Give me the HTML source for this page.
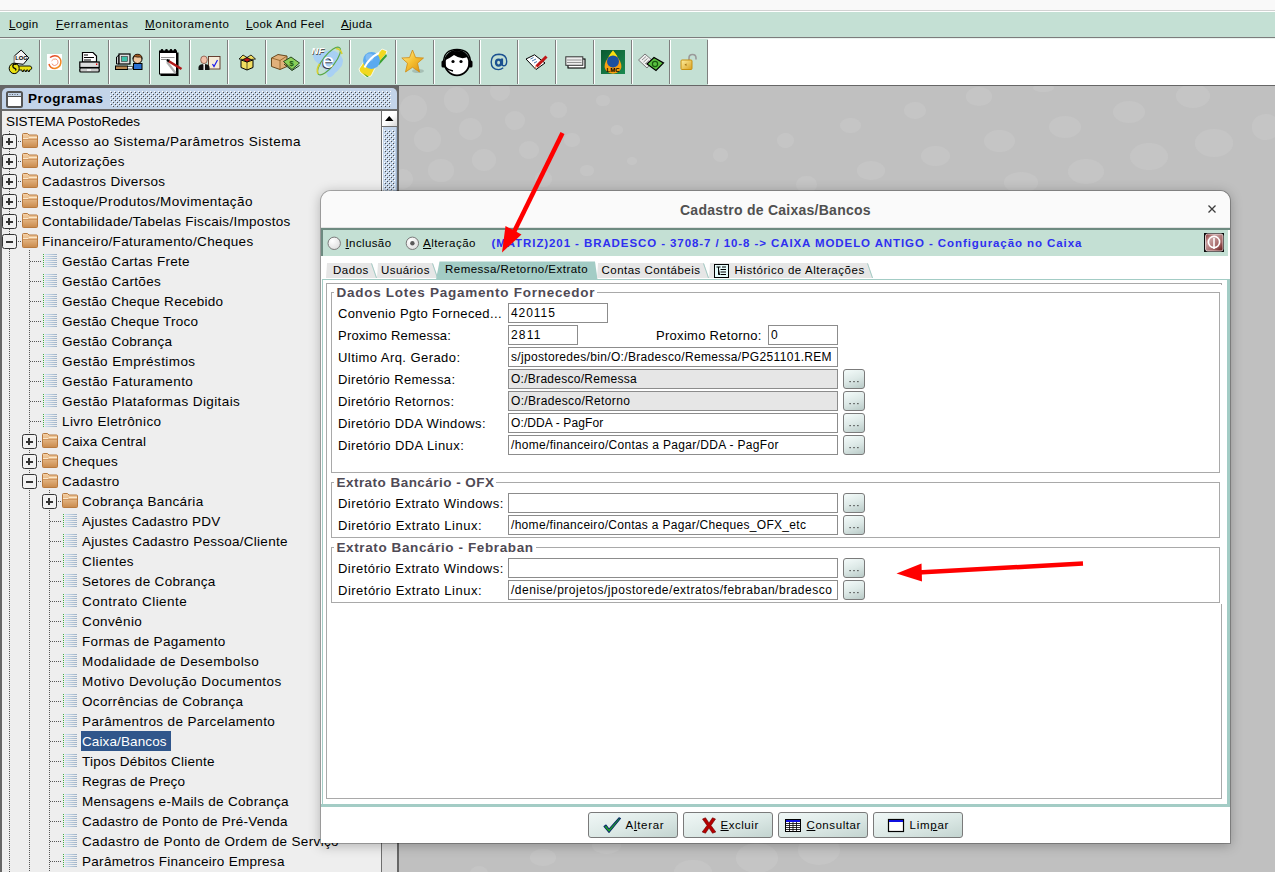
<!DOCTYPE html>
<html><head><meta charset="utf-8"><title>Cadastro de Caixas/Bancos</title>
<style>
html,body{margin:0;padding:0;width:1275px;height:872px;overflow:hidden;background:#c0c0c0;}
body{position:relative;font-family:"Liberation Sans",sans-serif;color:#000;}
.r{position:absolute;box-sizing:border-box;}
.t{position:absolute;white-space:pre;}
u{text-decoration:underline;text-underline-offset:1px;}
svg{position:absolute;overflow:visible;}
</style></head><body>
<div class="r" style="left:0px;top:0px;width:1275px;height:10px;background:#f9f9f9"></div>
<div class="r" style="left:0px;top:10px;width:1275px;height:1px;background:#d2d2d2"></div>
<div class="r" style="left:0px;top:11px;width:1275px;height:1px;background:#ffffff"></div>
<div class="r" style="left:0px;top:12px;width:1275px;height:25px;background:#c4e0d4"></div>
<div class="r" style="left:0px;top:37px;width:1275px;height:1px;background:#7c7c7c"></div>
<div class="r" style="left:0px;top:38px;width:1275px;height:1px;background:#eaf4ef"></div>
<div class="r" style="left:0px;top:39px;width:1275px;height:46px;background:#c4e0d4"></div>
<div class="t" style="left:9.00px;top:19px;font-size:11.5px;line-height:11.5px;letter-spacing:0.225px;"><u>L</u>ogin</div>
<div class="t" style="left:56.00px;top:19px;font-size:11.5px;line-height:11.5px;letter-spacing:0.680px;"><u>F</u>erramentas</div>
<div class="t" style="left:145.00px;top:19px;font-size:11.5px;line-height:11.5px;letter-spacing:0.608px;"><u>M</u>onitoramento</div>
<div class="t" style="left:246.00px;top:19px;font-size:11.5px;line-height:11.5px;letter-spacing:0.375px;"><u>L</u>ook And Feel</div>
<div class="t" style="left:341.00px;top:19px;font-size:11.5px;line-height:11.5px;letter-spacing:0.400px;"><u>A</u>juda</div>
<div class="r" style="left:39px;top:40px;width:1px;height:44px;background:#7f7f7f"></div>
<div class="r" style="left:40px;top:40px;width:1px;height:44px;background:#ffffff"></div>
<div class="r" style="left:68px;top:40px;width:1px;height:44px;background:#7f7f7f"></div>
<div class="r" style="left:69px;top:40px;width:1px;height:44px;background:#ffffff"></div>
<div class="r" style="left:108px;top:40px;width:1px;height:44px;background:#7f7f7f"></div>
<div class="r" style="left:109px;top:40px;width:1px;height:44px;background:#ffffff"></div>
<div class="r" style="left:149px;top:40px;width:1px;height:44px;background:#7f7f7f"></div>
<div class="r" style="left:150px;top:40px;width:1px;height:44px;background:#ffffff"></div>
<div class="r" style="left:189px;top:40px;width:1px;height:44px;background:#7f7f7f"></div>
<div class="r" style="left:190px;top:40px;width:1px;height:44px;background:#ffffff"></div>
<div class="r" style="left:227px;top:40px;width:1px;height:44px;background:#7f7f7f"></div>
<div class="r" style="left:228px;top:40px;width:1px;height:44px;background:#ffffff"></div>
<div class="r" style="left:265px;top:40px;width:1px;height:44px;background:#7f7f7f"></div>
<div class="r" style="left:266px;top:40px;width:1px;height:44px;background:#ffffff"></div>
<div class="r" style="left:303px;top:40px;width:1px;height:44px;background:#7f7f7f"></div>
<div class="r" style="left:304px;top:40px;width:1px;height:44px;background:#ffffff"></div>
<div class="r" style="left:349px;top:40px;width:1px;height:44px;background:#7f7f7f"></div>
<div class="r" style="left:350px;top:40px;width:1px;height:44px;background:#ffffff"></div>
<div class="r" style="left:395px;top:40px;width:1px;height:44px;background:#7f7f7f"></div>
<div class="r" style="left:396px;top:40px;width:1px;height:44px;background:#ffffff"></div>
<div class="r" style="left:433px;top:40px;width:1px;height:44px;background:#7f7f7f"></div>
<div class="r" style="left:434px;top:40px;width:1px;height:44px;background:#ffffff"></div>
<div class="r" style="left:479px;top:40px;width:1px;height:44px;background:#7f7f7f"></div>
<div class="r" style="left:480px;top:40px;width:1px;height:44px;background:#ffffff"></div>
<div class="r" style="left:517px;top:40px;width:1px;height:44px;background:#7f7f7f"></div>
<div class="r" style="left:518px;top:40px;width:1px;height:44px;background:#ffffff"></div>
<div class="r" style="left:555px;top:40px;width:1px;height:44px;background:#7f7f7f"></div>
<div class="r" style="left:556px;top:40px;width:1px;height:44px;background:#ffffff"></div>
<div class="r" style="left:593px;top:40px;width:1px;height:44px;background:#7f7f7f"></div>
<div class="r" style="left:594px;top:40px;width:1px;height:44px;background:#ffffff"></div>
<div class="r" style="left:631px;top:40px;width:1px;height:44px;background:#7f7f7f"></div>
<div class="r" style="left:632px;top:40px;width:1px;height:44px;background:#ffffff"></div>
<div class="r" style="left:669px;top:40px;width:1px;height:44px;background:#7f7f7f"></div>
<div class="r" style="left:670px;top:40px;width:1px;height:44px;background:#ffffff"></div>
<div class="r" style="left:707px;top:40px;width:1px;height:44px;background:#7f7f7f"></div>
<div class="r" style="left:708px;top:40px;width:1px;height:44px;background:#ffffff"></div>
<div class="r" style="left:708px;top:39px;width:567px;height:46px;background:#ffffff"></div>
<div class="r" style="left:0px;top:85px;width:1275px;height:1px;background:#666"></div>
<div class="r" style="left:399px;top:86px;width:876px;height:786px;background:#c0c0c0;overflow:hidden"></div>
<svg style="left:8px;top:49px" width="26" height="26" viewBox="0 0 26 26"><path d="M13.2 1 L20.8 8.9 L15.3 15.3 L6.3 14.2 L6.3 7 Z" fill="#f4f4f4" stroke="#000" stroke-width="1"/><path d="M6.3 7 L6.3 14.2" stroke="#bbb" stroke-width="1"/><text x="13.6" y="11.2" font-family="Liberation Sans" font-size="5.8" font-weight="bold" text-anchor="middle" fill="#000">LOG</text><path d="M10.5 17 H22.5 L24 19 L22.5 21 H21.5 V22.5 H20 V21 H18.5 V22.5 H17 V21 H15.5 V22.5 H14 V21 H10.5 Z" fill="#e8e010" stroke="#000" stroke-width="0.9"/><ellipse cx="6.2" cy="19.4" rx="5" ry="5.2" fill="#e8e010" stroke="#000" stroke-width="1"/><path d="M8.5 15.5 Q5 14.5 4.8 17 Q4.8 19 7 19.5 Q8.5 20 7.5 21.5" fill="none" stroke="#000" stroke-width="1.3"/></svg>
<svg style="left:47px;top:54px" width="16" height="16" viewBox="0 0 16 16"><defs><linearGradient id="swg" x1="0" y1="0" x2="1" y2="1"><stop offset="0" stop-color="#e03828"/><stop offset="1" stop-color="#f8a020"/></linearGradient></defs><rect width="15" height="16" fill="#fff"/><path d="M3 3.5 Q7 0.8 11 2.5 Q14.5 5 13.8 9 Q13 13.5 8 14.5 Q3 14.5 2 10" fill="none" stroke="url(#swg)" stroke-width="1.5"/><path d="M4.5 7 Q6 4.5 9 5 Q11.5 6 11 9 Q10 11.5 7.5 11.5 Q5.5 11.5 5 9.5" fill="none" stroke="#f08060" stroke-width="1" opacity="0.8"/></svg>
<svg style="left:79px;top:51px" width="21" height="22" viewBox="0 0 21 22"><path d="M3.5 1.5 H14 L17.5 5 V11 H3.5 Z" fill="#fff" stroke="#000" stroke-width="1.2"/><path d="M5 4 H9 M5 6.5 H15 M5 9 H12" stroke="#000" stroke-width="1"/><rect x="0.8" y="11" width="19.4" height="5.5" fill="#ddd" stroke="#000" stroke-width="1.2"/><rect x="17" y="12.5" width="1.3" height="1.5" fill="#e00"/><rect x="0.8" y="17" width="19.4" height="4" rx="1" fill="#ccc" stroke="#000" stroke-width="1.2"/><rect x="8" y="18.3" width="4" height="1.4" fill="#fff"/></svg>
<svg style="left:115px;top:53px" width="28" height="18" viewBox="0 0 28 18"><path d="M1.5 4 L4 2 V11 H1.5 Z" fill="#ccc" stroke="#000" stroke-width="1"/><rect x="4" y="1" width="11" height="10" fill="#ddd" stroke="#000" stroke-width="1.2"/><rect x="6.5" y="3.5" width="6" height="5" fill="#3cc0a8" stroke="#333" stroke-width="0.6"/><rect x="0.5" y="13" width="12" height="3.5" fill="#b88850" stroke="#000" stroke-width="1"/><rect x="12.5" y="13.5" width="5" height="2.5" fill="#fff" stroke="#000" stroke-width="0.6"/><circle cx="22.5" cy="6" r="4.5" fill="#f0c8a0" stroke="#000" stroke-width="1"/><path d="M18 5.5 Q18.5 1.2 22.5 1.2 Q27 1.2 27 5.5 L25.5 4 Q22 4.5 19.5 3.5 Z" fill="#a05a20" stroke="#000" stroke-width="0.6"/><rect x="18.5" y="10.5" width="8.5" height="6" fill="#2a70d0" stroke="#000" stroke-width="1"/></svg>
<svg style="left:158px;top:48px" width="24" height="28" viewBox="0 0 24 28"><rect x="1.5" y="3.5" width="17" height="22.5" fill="#fff" stroke="#000" stroke-width="1"/><path d="M19.5 4.5 V27 H2.5" fill="none" stroke="#000" stroke-width="2"/><rect x="1" y="2.5" width="18" height="2.5" fill="#000"/><circle cx="4" cy="2.3" r="1.3" fill="#000"/><circle cx="8.5" cy="2.3" r="1.3" fill="#000"/><circle cx="13" cy="2.3" r="1.3" fill="#000"/><circle cx="17" cy="2.3" r="1.3" fill="#000"/><path d="M3 9.5 H16.5 M3 11.5 H12" stroke="#666" stroke-width="0.7"/><path d="M9 14 L17.5 25" stroke="#b0b0b0" stroke-width="2.2"/><path d="M10.5 13 L23.5 21" stroke="#b01818" stroke-width="2.6"/><path d="M8.8 12 L11 13.3" stroke="#000" stroke-width="2.2"/></svg>
<svg style="left:198px;top:55px" width="24" height="16" viewBox="0 0 24 16"><rect x="10.5" y="1.5" width="11.5" height="12.5" fill="#f6ecd8" stroke="#5a3020" stroke-width="0.9"/><path d="M14.5 9 L16 11.5 L19.5 5" fill="none" stroke="#1a1aee" stroke-width="1.2"/><ellipse cx="6" cy="4.8" rx="3.3" ry="3.8" fill="#f0c0a8" stroke="#7a4030" stroke-width="0.7"/><path d="M0.5 15 V12 Q1 9 6 9 Q11 9 11.5 12 V15 Z" fill="#111"/><path d="M5 9 H7 V15 H5 Z" fill="#fff"/><path d="M5.7 9.5 V15" stroke="#111" stroke-width="0.6"/></svg>
<svg style="left:238px;top:53px" width="19" height="18" viewBox="0 0 19 18"><path d="M3 7 L9 9 L15 7 L15 14.5 L9 17 L3 14.5 Z" fill="#f2de60" stroke="#000" stroke-width="1"/><path d="M5 6.5 L9 4.5 L13 6.5 L9 9 Z" fill="#c01010" stroke="#000" stroke-width="0.6"/><path d="M1 6 L5 2 L9 4.5 L5 6.5 Z M17.5 6 L13 2 L9 4.5 L13 6.5 Z" fill="#f2de60" stroke="#000" stroke-width="0.8"/><path d="M9 9 V17" stroke="#000" stroke-width="0.6"/></svg>
<svg style="left:270px;top:53px" width="31" height="19" viewBox="0 0 31 19"><path d="M1.5 5 L8 1.5 L17 3 L17 13.5 L10 16.5 L1.5 13.5 Z" fill="#e0b07a" stroke="#5a3a10" stroke-width="0.9"/><path d="M1.5 5 L10 7.5 L17 3 M10 7.5 V16.5" fill="none" stroke="#8a5a20" stroke-width="0.8"/><path d="M13.5 8.5 L21 4 L29.5 10 L22 16.5 Z" fill="#8cd05a" stroke="#1a3a10" stroke-width="0.9"/><path d="M14 11 L22 17.5 L29.5 12.5" fill="none" stroke="#1a3a10" stroke-width="1"/><text x="21.5" y="13" font-family="Liberation Sans" font-size="8" font-weight="bold" text-anchor="middle" fill="#1a5a10">$</text></svg>
<svg style="left:310px;top:46px" width="34" height="34" viewBox="0 0 34 34"><path d="M3 9 Q6 6 12 7 Q18 3 25 5 Q31 8 33 14 Q33 19 30 22 Q27 26 25 27 Q22 32 18 31 Q16 27 15 23 Q10 21 8 17 Q3 14 3 9 Z" fill="#a8d0f4"/><text x="2.2" y="8.6" font-family="Liberation Sans" font-size="9.5" font-style="italic" font-weight="bold" fill="#555">NF</text><text x="1.6" y="8" font-family="Liberation Sans" font-size="9.5" font-style="italic" font-weight="bold" fill="#fff">NF</text><ellipse cx="19" cy="15" rx="6" ry="17" transform="rotate(38 19 15)" fill="none" stroke="#5aa848" stroke-width="1.2"/><path d="M26 2.5 Q31 3 32 8" fill="none" stroke="#d8d030" stroke-width="1.5"/><path d="M9.5 18 Q6 23 8 28" fill="none" stroke="#d8d030" stroke-width="1.5"/><text x="11.6" y="22.6" font-family="Liberation Sans" font-size="21" fill="#334">e</text><text x="12.2" y="22.3" font-family="Liberation Sans" font-size="21" fill="#fff">e</text></svg>
<svg style="left:357px;top:46px" width="31" height="32" viewBox="0 0 31 32"><path d="M2 23 L8 14 L14 22 L19 10 L25 3 L30 5 L29 8 L24 14 L19 20 L14 30 L9 31 L3 26 Z" fill="#f2d820" stroke="#fff" stroke-width="0.8"/><path d="M20 18 L29 8 L30 10 L22 19 Z" fill="#3aa030"/><path d="M6 27 L12 31 L10 31 Z" fill="#3aa030"/><circle cx="14.5" cy="14.5" r="8.5" fill="#5aaaf0"/><circle cx="12.5" cy="11.5" r="4" fill="#9ccaf6" opacity="0.6"/><path d="M7.5 21.5 Q12 12 22 7" fill="none" stroke="#fff" stroke-width="2"/></svg>
<svg style="left:401px;top:49px" width="25" height="27" viewBox="0 0 25 27"><defs><linearGradient id="sg" x1="0" y1="0" x2="1" y2="1"><stop offset="0" stop-color="#fff2a0"/><stop offset="0.5" stop-color="#f6c030"/><stop offset="1" stop-color="#d88a10"/></linearGradient></defs><ellipse cx="17" cy="22" rx="6" ry="2" fill="#9ab0a8" opacity="0.7"/><path d="M11.5 1 L14.6 8.6 L22.5 9 L16.5 14.2 L18.5 23 L11.5 18.3 L4.5 23 L6.5 14.2 L0.8 9 L8.5 8.6 Z" fill="url(#sg)" stroke="#d08a10" stroke-width="0.8"/></svg>
<svg style="left:440px;top:48px" width="34" height="29" viewBox="0 0 34 29"><circle cx="17" cy="15" r="12.3" fill="#fff" stroke="#000" stroke-width="1.8"/><path d="M5.5 12 Q7 3 17 3 Q25 3 27.5 9 Q21 12 14 7 Q10 10 5.5 12 Z" fill="#000"/><path d="M3.5 15 Q3.5 1.5 17 1.5 Q30.5 1.5 30.5 15" fill="none" stroke="#000" stroke-width="1.4"/><rect x="1.5" y="12.5" width="4" height="7" rx="1.5" fill="#000"/><rect x="28.5" y="12.5" width="4" height="7" rx="1.5" fill="#000"/><circle cx="13" cy="13.5" r="1.6" fill="#000"/><circle cx="21" cy="13.5" r="1.6" fill="#000"/><path d="M5 19 Q8 22 13 23" fill="none" stroke="#000" stroke-width="1.4"/></svg>
<svg style="left:490px;top:53px" width="18" height="18" viewBox="0 0 18 18"><path d="M13.2 14.8 Q11 16.6 8.6 16.6 Q1.2 16.4 1.2 9 Q1.3 1.4 9 1.2 Q16.7 1.4 16.7 8.5 Q16.6 12.8 13.6 12.8 Q12 12.8 12.1 10.8" fill="none" stroke="#1a5090" stroke-width="1.4"/><ellipse cx="8.6" cy="9.6" rx="2.6" ry="3" fill="none" stroke="#1a5090" stroke-width="2.3"/><path d="M12 5.5 V12.5" stroke="#1a5090" stroke-width="2.2"/></svg>
<svg style="left:525px;top:54px" width="24" height="17" viewBox="0 0 24 17"><path d="M1 5 L9.5 0.8 L20 9 L11 15.5 Z" fill="#fff" stroke="#000" stroke-width="1"/><path d="M5.5 5 L8.5 3.5 M7 7 L11 5 M9 9 L12 7.5" stroke="#4a7ab0" stroke-width="1"/><path d="M11.5 12.5 L21.5 2.5" stroke="#c01818" stroke-width="3"/><path d="M10 14 L11.5 12.2" stroke="#f08060" stroke-width="1.2"/></svg>
<svg style="left:565px;top:56px" width="21" height="13" viewBox="0 0 21 13"><rect x="3" y="3" width="17" height="9" fill="#fff" stroke="#000" stroke-width="1.1"/><rect x="0.8" y="0.8" width="17" height="8.5" fill="#eee" stroke="#333" stroke-width="1"/><path d="M2 4 H16.5 M2 6.5 H16.5" stroke="#888" stroke-width="0.9"/></svg>
<svg style="left:601px;top:50px" width="24" height="24" viewBox="0 0 24 24"><defs><linearGradient id="lg" x1="0" y1="0" x2="1" y2="1"><stop offset="0" stop-color="#0a5a30"/><stop offset="1" stop-color="#1a8a50"/></linearGradient></defs><rect width="24" height="24" fill="url(#lg)"/><path d="M12 0.5 Q16 6 19 11 Q22 17 18.5 21 Q15.5 23.8 12 23.8 Q8.5 23.8 5.5 21 Q2 17 5 11 Q8 6 12 0.5 Z" fill="#f8a010"/><path d="M12 0.5 Q14.5 3.5 16.5 6.5 H7.5 Q9.5 3.5 12 0.5 Z" fill="#f8e010"/><circle cx="12" cy="11.5" r="6" fill="#1a50a0"/><text x="12" y="22.3" font-family="Liberation Sans" font-size="6" font-weight="bold" text-anchor="middle" fill="#000">LMC</text></svg>
<svg style="left:637px;top:53px" width="28" height="19" viewBox="0 0 28 19"><path d="M1.5 7 L8 1 L16 8 L10 15 Z" fill="#eee" stroke="#777" stroke-width="1"/><path d="M5 7 L9 3.5 M6.5 9 L10.5 5.5 M8 11 L12 7.5" stroke="#777" stroke-width="0.8"/><path d="M10 11 L17 4.5 L26.5 10 L19 17.5 Z" fill="#5ac040" stroke="#000" stroke-width="1.2"/><circle cx="18" cy="11" r="2.6" fill="none" stroke="#1a5a10" stroke-width="1.2"/></svg>
<svg style="left:680px;top:53px" width="19" height="18" viewBox="0 0 19 18"><path d="M9 8 V5 Q9 1.5 12.5 1.5 Q16 1.5 16 5 V6.5" fill="none" stroke="#9a9a9a" stroke-width="1.6"/><defs><linearGradient id="pl" x1="0" y1="0" x2="1" y2="1"><stop offset="0" stop-color="#fff0a0"/><stop offset="1" stop-color="#d8a020"/></linearGradient></defs><rect x="1" y="7" width="11" height="9.5" rx="1" fill="url(#pl)" stroke="#c89010" stroke-width="1"/><path d="M6.5 10.5 L4.5 11.8 L6.5 13 Z" fill="#a07010"/></svg>
<div class="r" style="left:399px;top:86px;width:876px;height:786px;overflow:hidden">
<div class="r" style="left:0.9px;top:8.8px;width:27.2px;height:27.2px;border-radius:50%;background:#c5c5c5"></div>
<div class="r" style="left:44.9px;top:1.0px;width:25.5px;height:25.5px;border-radius:50%;background:#c5c5c5"></div>
<div class="r" style="left:90.6px;top:-5.2px;width:20.4px;height:20.4px;border-radius:50%;background:#c5c5c5"></div>
<div class="r" style="left:105.8px;top:25.1px;width:20.4px;height:18.7px;border-radius:50%;background:#c5c5c5"></div>
<div class="r" style="left:150.8px;top:16.4px;width:17.0px;height:15.3px;border-radius:50%;background:#c5c5c5"></div>
<div class="r" style="left:197.2px;top:8.6px;width:13.6px;height:11.9px;border-radius:50%;background:#c5c5c5"></div>
<div class="r" style="left:14.7px;top:40.7px;width:27.2px;height:25.5px;border-radius:50%;background:#c5c5c5"></div>
<div class="r" style="left:59.5px;top:32.0px;width:23.8px;height:22.1px;border-radius:50%;background:#c5c5c5"></div>
<div class="r" style="left:119.8px;top:54.5px;width:20.4px;height:18.7px;border-radius:50%;background:#c5c5c5"></div>
<div class="r" style="left:165.3px;top:47.2px;width:15.3px;height:13.6px;border-radius:50%;background:#c5c5c5"></div>
<div class="r" style="left:212.1px;top:38.9px;width:11.9px;height:10.2px;border-radius:50%;background:#c5c5c5"></div>
<div class="r" style="left:73.1px;top:63.0px;width:23.8px;height:22.1px;border-radius:50%;background:#c5c5c5"></div>
<div class="r" style="left:29.2px;top:72.6px;width:25.5px;height:23.8px;border-radius:50%;background:#c5c5c5"></div>
<div class="r" style="left:-6.2px;top:82.8px;width:20.4px;height:20.4px;border-radius:50%;background:#c5c5c5"></div>
<div class="r" style="left:181.2px;top:78.5px;width:13.6px;height:11.9px;border-radius:50%;background:#c5c5c5"></div>
<div class="r" style="left:227.5px;top:70.8px;width:10.2px;height:8.5px;border-radius:50%;background:#c5c5c5"></div>
<div class="r" style="left:135.5px;top:85.3px;width:17.0px;height:15.3px;border-radius:50%;background:#c5c5c5"></div>
<div class="r" style="left:314.0px;top:62.2px;width:15.3px;height:13.6px;border-radius:50%;background:#c5c5c5"></div>
<div class="r" style="left:377.5px;top:46.9px;width:17.0px;height:15.3px;border-radius:50%;background:#c5c5c5"></div>
<div class="r" style="left:397.4px;top:89.5px;width:20.4px;height:17.0px;border-radius:50%;background:#c5c5c5"></div>
<div class="r" style="left:131.2px;top:762.5px;width:25.5px;height:17.0px;border-radius:50%;background:#c5c5c5"></div>
<div class="r" style="left:70.7px;top:780.4px;width:18.7px;height:15.3px;border-radius:50%;background:#c5c5c5"></div>
<div class="r" style="left:193.2px;top:750.5px;width:28.9px;height:17.0px;border-radius:50%;background:#c5c5c5"></div>
<div class="r" style="left:275.3px;top:774.1px;width:37.4px;height:23.8px;border-radius:50%;background:#c5c5c5"></div>
<div class="r" style="left:336.8px;top:756.7px;width:42.5px;height:30.6px;border-radius:50%;background:#c5c5c5"></div>
<div class="r" style="left:398.5px;top:748.7px;width:42.5px;height:30.6px;border-radius:50%;background:#c5c5c5"></div>
<div class="r" style="left:441.3px;top:32.1px;width:20.4px;height:15.3px;border-radius:50%;background:#c5c5c5"></div>
<div class="r" style="left:504.9px;top:16.3px;width:22.1px;height:17.0px;border-radius:50%;background:#c5c5c5"></div>
<div class="r" style="left:567.2px;top:0.9px;width:25.5px;height:18.7px;border-radius:50%;background:#c5c5c5"></div>
<div class="r" style="left:458.4px;top:75.2px;width:27.2px;height:18.7px;border-radius:50%;background:#c5c5c5"></div>
<div class="r" style="left:522.2px;top:59.8px;width:28.9px;height:20.4px;border-radius:50%;background:#c5c5c5"></div>
<div class="r" style="left:585.2px;top:44.0px;width:30.6px;height:22.1px;border-radius:50%;background:#c5c5c5"></div>
<div class="r" style="left:605.0px;top:86.3px;width:34.0px;height:20.4px;border-radius:50%;background:#c5c5c5"></div>
<div class="r" style="left:649.9px;top:29.7px;width:32.3px;height:22.1px;border-radius:50%;background:#c5c5c5"></div>
<div class="r" style="left:669.1px;top:72.8px;width:35.7px;height:25.5px;border-radius:50%;background:#c5c5c5"></div>
<div class="r" style="left:713.9px;top:15.0px;width:32.3px;height:22.1px;border-radius:50%;background:#c5c5c5"></div>
<div class="r" style="left:731.3px;top:57.1px;width:37.4px;height:27.2px;border-radius:50%;background:#c5c5c5"></div>
<div class="r" style="left:777.0px;top:-1.6px;width:34.0px;height:23.8px;border-radius:50%;background:#c5c5c5"></div>
<div class="r" style="left:796.3px;top:43.4px;width:37.4px;height:27.2px;border-radius:50%;background:#c5c5c5"></div>
<div class="r" style="left:852.5px;top:28.2px;width:28.9px;height:25.5px;border-radius:50%;background:#c5c5c5"></div>
<div class="r" style="left:634.4px;top:-2.5px;width:20.4px;height:8.5px;border-radius:50%;background:#c5c5c5"></div>
</div>
<div class="r" style="left:0px;top:86px;width:399px;height:786px;background:#666"></div>
<div class="r" style="left:2px;top:88px;width:395px;height:21px;background:#c3d4e9;border-radius:5px 5px 0 0"></div>
<div class="r" style="left:2px;top:109px;width:395px;height:2px;background:#6a6a6a"></div>
<div class="r" style="left:2px;top:111px;width:379px;height:761px;background:#eeeeee"></div>
<svg style="left:6px;top:91px" width="17" height="17" viewBox="0 0 17 17"><rect x="1" y="1" width="15" height="15" rx="1.5" fill="#fff" stroke="#555" stroke-width="2"/><rect x="2" y="2" width="13" height="3" fill="#c3d4e9"/><path d="M2 5.5 H15" stroke="#555" stroke-width="1"/><circle cx="4" cy="3.5" r="0.6" fill="#555"/><circle cx="6.5" cy="3.5" r="0.6" fill="#555"/><circle cx="9" cy="3.5" r="0.6" fill="#555"/><circle cx="11.5" cy="3.5" r="0.6" fill="#555"/></svg>
<div class="t" style="left:28.00px;top:92px;font-size:13.5px;line-height:13.5px;font-weight:bold;letter-spacing:0.562px;">Programas</div>
<svg style="left:110px;top:91px" width="281" height="16"><defs><pattern id="p110_91" width="4" height="4" patternUnits="userSpaceOnUse"><rect x="1" y="1" width="1" height="1" fill="#4a4a4a"/><rect x="0" y="0" width="1" height="1" fill="#ffffff"/><rect x="3" y="3" width="1" height="1" fill="#4a4a4a"/><rect x="2" y="2" width="1" height="1" fill="#ffffff"/></pattern></defs><rect width="281" height="16" fill="url(#p110_91)"/></svg>
<div class="r" style="left:9px;top:131px;width:1px;height:741px;background:repeating-linear-gradient(to bottom,#555 0 1px,transparent 1px 2px)"></div>
<div class="r" style="left:29px;top:250px;width:1px;height:622px;background:repeating-linear-gradient(to bottom,#555 0 1px,transparent 1px 2px)"></div>
<div class="r" style="left:49px;top:490px;width:1px;height:382px;background:repeating-linear-gradient(to bottom,#555 0 1px,transparent 1px 2px)"></div>
<div class="t" style="left:6.00px;top:115px;font-size:13.5px;line-height:13.5px;letter-spacing:-0.106px;">SISTEMA PostoRedes</div>
<div class="r" style="left:18px;top:141px;width:4px;height:1px;background:repeating-linear-gradient(to right,#555 0 1px,transparent 1px 2px)"></div>
<div class="r" style="left:2px;top:134px;width:15px;height:15px;border:1px solid #333;border-radius:2.5px;background:#f1f1f1"></div><div class="r" style="left:6px;top:141px;width:7px;height:2px;background:#333"></div><div class="r" style="left:8px;top:138px;width:2px;height:7px;background:#333"></div>
<svg style="left:22px;top:132px" width="16" height="16" viewBox="0 0 16 16"><defs><linearGradient id="fg" x1="0" y1="0" x2="0" y2="1"><stop offset="0" stop-color="#f6d3a8"/><stop offset="1" stop-color="#c98a4c"/></linearGradient></defs><path d="M0.5 2.5 Q0.5 1.5 1.5 1.5 L5.5 1.5 L7 3 L14.5 3 Q15.5 3 15.5 4 L15.5 14.5 Q15.5 15.5 14.5 15.5 L1.5 15.5 Q0.5 15.5 0.5 14.5 Z" fill="url(#fg)" stroke="#b87a40" stroke-width="1"/><path d="M1 6.5 L6 6.5 L7 5.5 L15 5.5" fill="none" stroke="#fbe6c8" stroke-width="1"/><path d="M1 7.5 L15 7.5" fill="none" stroke="#c58a52" stroke-width="0.7"/></svg>
<div class="t" style="left:42.00px;top:135px;font-size:13.5px;line-height:13.5px;letter-spacing:0.483px;">Acesso ao Sistema/Parâmetros Sistema</div>
<div class="r" style="left:18px;top:161px;width:4px;height:1px;background:repeating-linear-gradient(to right,#555 0 1px,transparent 1px 2px)"></div>
<div class="r" style="left:2px;top:154px;width:15px;height:15px;border:1px solid #333;border-radius:2.5px;background:#f1f1f1"></div><div class="r" style="left:6px;top:161px;width:7px;height:2px;background:#333"></div><div class="r" style="left:8px;top:158px;width:2px;height:7px;background:#333"></div>
<svg style="left:22px;top:152px" width="16" height="16" viewBox="0 0 16 16"><defs><linearGradient id="fg" x1="0" y1="0" x2="0" y2="1"><stop offset="0" stop-color="#f6d3a8"/><stop offset="1" stop-color="#c98a4c"/></linearGradient></defs><path d="M0.5 2.5 Q0.5 1.5 1.5 1.5 L5.5 1.5 L7 3 L14.5 3 Q15.5 3 15.5 4 L15.5 14.5 Q15.5 15.5 14.5 15.5 L1.5 15.5 Q0.5 15.5 0.5 14.5 Z" fill="url(#fg)" stroke="#b87a40" stroke-width="1"/><path d="M1 6.5 L6 6.5 L7 5.5 L15 5.5" fill="none" stroke="#fbe6c8" stroke-width="1"/><path d="M1 7.5 L15 7.5" fill="none" stroke="#c58a52" stroke-width="0.7"/></svg>
<div class="t" style="left:42.00px;top:155px;font-size:13.5px;line-height:13.5px;letter-spacing:0.409px;">Autorizações</div>
<div class="r" style="left:18px;top:181px;width:4px;height:1px;background:repeating-linear-gradient(to right,#555 0 1px,transparent 1px 2px)"></div>
<div class="r" style="left:2px;top:174px;width:15px;height:15px;border:1px solid #333;border-radius:2.5px;background:#f1f1f1"></div><div class="r" style="left:6px;top:181px;width:7px;height:2px;background:#333"></div><div class="r" style="left:8px;top:178px;width:2px;height:7px;background:#333"></div>
<svg style="left:22px;top:172px" width="16" height="16" viewBox="0 0 16 16"><defs><linearGradient id="fg" x1="0" y1="0" x2="0" y2="1"><stop offset="0" stop-color="#f6d3a8"/><stop offset="1" stop-color="#c98a4c"/></linearGradient></defs><path d="M0.5 2.5 Q0.5 1.5 1.5 1.5 L5.5 1.5 L7 3 L14.5 3 Q15.5 3 15.5 4 L15.5 14.5 Q15.5 15.5 14.5 15.5 L1.5 15.5 Q0.5 15.5 0.5 14.5 Z" fill="url(#fg)" stroke="#b87a40" stroke-width="1"/><path d="M1 6.5 L6 6.5 L7 5.5 L15 5.5" fill="none" stroke="#fbe6c8" stroke-width="1"/><path d="M1 7.5 L15 7.5" fill="none" stroke="#c58a52" stroke-width="0.7"/></svg>
<div class="t" style="left:42.00px;top:175px;font-size:13.5px;line-height:13.5px;letter-spacing:0.312px;">Cadastros Diversos</div>
<div class="r" style="left:18px;top:201px;width:4px;height:1px;background:repeating-linear-gradient(to right,#555 0 1px,transparent 1px 2px)"></div>
<div class="r" style="left:2px;top:194px;width:15px;height:15px;border:1px solid #333;border-radius:2.5px;background:#f1f1f1"></div><div class="r" style="left:6px;top:201px;width:7px;height:2px;background:#333"></div><div class="r" style="left:8px;top:198px;width:2px;height:7px;background:#333"></div>
<svg style="left:22px;top:192px" width="16" height="16" viewBox="0 0 16 16"><defs><linearGradient id="fg" x1="0" y1="0" x2="0" y2="1"><stop offset="0" stop-color="#f6d3a8"/><stop offset="1" stop-color="#c98a4c"/></linearGradient></defs><path d="M0.5 2.5 Q0.5 1.5 1.5 1.5 L5.5 1.5 L7 3 L14.5 3 Q15.5 3 15.5 4 L15.5 14.5 Q15.5 15.5 14.5 15.5 L1.5 15.5 Q0.5 15.5 0.5 14.5 Z" fill="url(#fg)" stroke="#b87a40" stroke-width="1"/><path d="M1 6.5 L6 6.5 L7 5.5 L15 5.5" fill="none" stroke="#fbe6c8" stroke-width="1"/><path d="M1 7.5 L15 7.5" fill="none" stroke="#c58a52" stroke-width="0.7"/></svg>
<div class="t" style="left:42.00px;top:195px;font-size:13.5px;line-height:13.5px;letter-spacing:0.414px;">Estoque/Produtos/Movimentação</div>
<div class="r" style="left:18px;top:221px;width:4px;height:1px;background:repeating-linear-gradient(to right,#555 0 1px,transparent 1px 2px)"></div>
<div class="r" style="left:2px;top:214px;width:15px;height:15px;border:1px solid #333;border-radius:2.5px;background:#f1f1f1"></div><div class="r" style="left:6px;top:221px;width:7px;height:2px;background:#333"></div><div class="r" style="left:8px;top:218px;width:2px;height:7px;background:#333"></div>
<svg style="left:22px;top:212px" width="16" height="16" viewBox="0 0 16 16"><defs><linearGradient id="fg" x1="0" y1="0" x2="0" y2="1"><stop offset="0" stop-color="#f6d3a8"/><stop offset="1" stop-color="#c98a4c"/></linearGradient></defs><path d="M0.5 2.5 Q0.5 1.5 1.5 1.5 L5.5 1.5 L7 3 L14.5 3 Q15.5 3 15.5 4 L15.5 14.5 Q15.5 15.5 14.5 15.5 L1.5 15.5 Q0.5 15.5 0.5 14.5 Z" fill="url(#fg)" stroke="#b87a40" stroke-width="1"/><path d="M1 6.5 L6 6.5 L7 5.5 L15 5.5" fill="none" stroke="#fbe6c8" stroke-width="1"/><path d="M1 7.5 L15 7.5" fill="none" stroke="#c58a52" stroke-width="0.7"/></svg>
<div class="t" style="left:42.00px;top:215px;font-size:13.5px;line-height:13.5px;letter-spacing:0.303px;">Contabilidade/Tabelas Fiscais/Impostos</div>
<div class="r" style="left:18px;top:241px;width:4px;height:1px;background:repeating-linear-gradient(to right,#555 0 1px,transparent 1px 2px)"></div>
<div class="r" style="left:2px;top:234px;width:15px;height:15px;border:1px solid #333;border-radius:2.5px;background:#f1f1f1"></div><div class="r" style="left:6px;top:241px;width:7px;height:2px;background:#333"></div>
<svg style="left:22px;top:232px" width="16" height="16" viewBox="0 0 16 16"><defs><linearGradient id="fg" x1="0" y1="0" x2="0" y2="1"><stop offset="0" stop-color="#f6d3a8"/><stop offset="1" stop-color="#c98a4c"/></linearGradient></defs><path d="M0.5 2.5 Q0.5 1.5 1.5 1.5 L5.5 1.5 L7 3 L14.5 3 Q15.5 3 15.5 4 L15.5 14.5 Q15.5 15.5 14.5 15.5 L1.5 15.5 Q0.5 15.5 0.5 14.5 Z" fill="url(#fg)" stroke="#b87a40" stroke-width="1"/><path d="M1 6.5 L6 6.5 L7 5.5 L15 5.5" fill="none" stroke="#fbe6c8" stroke-width="1"/><path d="M1 7.5 L15 7.5" fill="none" stroke="#c58a52" stroke-width="0.7"/></svg>
<div class="t" style="left:42.00px;top:235px;font-size:13.5px;line-height:13.5px;letter-spacing:0.348px;">Financeiro/Faturamento/Cheques</div>
<div class="r" style="left:30px;top:261px;width:11px;height:1px;background:repeating-linear-gradient(to right,#555 0 1px,transparent 1px 2px)"></div>
<svg style="left:43px;top:254px" width="15" height="14" viewBox="0 0 15 14"><defs><linearGradient id="lfg" x1="0" x2="1" y1="0" y2="0"><stop offset="0" stop-color="#cde0f2"/><stop offset="1" stop-color="#9fb2c6"/></linearGradient></defs><rect x="0" y="0" width="1" height="1" fill="#3fae3f"/><rect x="2" y="0" width="12" height="1" fill="url(#lfg)"/><rect x="0" y="2" width="1" height="1" fill="#3fae3f"/><rect x="2" y="2" width="12" height="1" fill="url(#lfg)"/><rect x="0" y="4" width="1" height="1" fill="#3fae3f"/><rect x="2" y="4" width="12" height="1" fill="url(#lfg)"/><rect x="0" y="6" width="1" height="1" fill="#3fae3f"/><rect x="2" y="6" width="12" height="1" fill="url(#lfg)"/><rect x="0" y="8" width="1" height="1" fill="#3fae3f"/><rect x="2" y="8" width="12" height="1" fill="url(#lfg)"/><rect x="0" y="10" width="1" height="1" fill="#3fae3f"/><rect x="2" y="10" width="12" height="1" fill="url(#lfg)"/><rect x="0" y="12" width="1" height="1" fill="#3fae3f"/><rect x="2" y="12" width="12" height="1" fill="url(#lfg)"/></svg>
<div class="t" style="left:62.00px;top:255px;font-size:13.5px;line-height:13.5px;letter-spacing:0.294px;">Gestão Cartas Frete</div>
<div class="r" style="left:30px;top:281px;width:11px;height:1px;background:repeating-linear-gradient(to right,#555 0 1px,transparent 1px 2px)"></div>
<svg style="left:43px;top:274px" width="15" height="14" viewBox="0 0 15 14"><defs><linearGradient id="lfg" x1="0" x2="1" y1="0" y2="0"><stop offset="0" stop-color="#cde0f2"/><stop offset="1" stop-color="#9fb2c6"/></linearGradient></defs><rect x="0" y="0" width="1" height="1" fill="#3fae3f"/><rect x="2" y="0" width="12" height="1" fill="url(#lfg)"/><rect x="0" y="2" width="1" height="1" fill="#3fae3f"/><rect x="2" y="2" width="12" height="1" fill="url(#lfg)"/><rect x="0" y="4" width="1" height="1" fill="#3fae3f"/><rect x="2" y="4" width="12" height="1" fill="url(#lfg)"/><rect x="0" y="6" width="1" height="1" fill="#3fae3f"/><rect x="2" y="6" width="12" height="1" fill="url(#lfg)"/><rect x="0" y="8" width="1" height="1" fill="#3fae3f"/><rect x="2" y="8" width="12" height="1" fill="url(#lfg)"/><rect x="0" y="10" width="1" height="1" fill="#3fae3f"/><rect x="2" y="10" width="12" height="1" fill="url(#lfg)"/><rect x="0" y="12" width="1" height="1" fill="#3fae3f"/><rect x="2" y="12" width="12" height="1" fill="url(#lfg)"/></svg>
<div class="t" style="left:62.00px;top:275px;font-size:13.5px;line-height:13.5px;letter-spacing:0.323px;">Gestão Cartões</div>
<div class="r" style="left:30px;top:301px;width:11px;height:1px;background:repeating-linear-gradient(to right,#555 0 1px,transparent 1px 2px)"></div>
<svg style="left:43px;top:294px" width="15" height="14" viewBox="0 0 15 14"><defs><linearGradient id="lfg" x1="0" x2="1" y1="0" y2="0"><stop offset="0" stop-color="#cde0f2"/><stop offset="1" stop-color="#9fb2c6"/></linearGradient></defs><rect x="0" y="0" width="1" height="1" fill="#3fae3f"/><rect x="2" y="0" width="12" height="1" fill="url(#lfg)"/><rect x="0" y="2" width="1" height="1" fill="#3fae3f"/><rect x="2" y="2" width="12" height="1" fill="url(#lfg)"/><rect x="0" y="4" width="1" height="1" fill="#3fae3f"/><rect x="2" y="4" width="12" height="1" fill="url(#lfg)"/><rect x="0" y="6" width="1" height="1" fill="#3fae3f"/><rect x="2" y="6" width="12" height="1" fill="url(#lfg)"/><rect x="0" y="8" width="1" height="1" fill="#3fae3f"/><rect x="2" y="8" width="12" height="1" fill="url(#lfg)"/><rect x="0" y="10" width="1" height="1" fill="#3fae3f"/><rect x="2" y="10" width="12" height="1" fill="url(#lfg)"/><rect x="0" y="12" width="1" height="1" fill="#3fae3f"/><rect x="2" y="12" width="12" height="1" fill="url(#lfg)"/></svg>
<div class="t" style="left:62.00px;top:295px;font-size:13.5px;line-height:13.5px;letter-spacing:0.271px;">Gestão Cheque Recebido</div>
<div class="r" style="left:30px;top:321px;width:11px;height:1px;background:repeating-linear-gradient(to right,#555 0 1px,transparent 1px 2px)"></div>
<svg style="left:43px;top:314px" width="15" height="14" viewBox="0 0 15 14"><defs><linearGradient id="lfg" x1="0" x2="1" y1="0" y2="0"><stop offset="0" stop-color="#cde0f2"/><stop offset="1" stop-color="#9fb2c6"/></linearGradient></defs><rect x="0" y="0" width="1" height="1" fill="#3fae3f"/><rect x="2" y="0" width="12" height="1" fill="url(#lfg)"/><rect x="0" y="2" width="1" height="1" fill="#3fae3f"/><rect x="2" y="2" width="12" height="1" fill="url(#lfg)"/><rect x="0" y="4" width="1" height="1" fill="#3fae3f"/><rect x="2" y="4" width="12" height="1" fill="url(#lfg)"/><rect x="0" y="6" width="1" height="1" fill="#3fae3f"/><rect x="2" y="6" width="12" height="1" fill="url(#lfg)"/><rect x="0" y="8" width="1" height="1" fill="#3fae3f"/><rect x="2" y="8" width="12" height="1" fill="url(#lfg)"/><rect x="0" y="10" width="1" height="1" fill="#3fae3f"/><rect x="2" y="10" width="12" height="1" fill="url(#lfg)"/><rect x="0" y="12" width="1" height="1" fill="#3fae3f"/><rect x="2" y="12" width="12" height="1" fill="url(#lfg)"/></svg>
<div class="t" style="left:62.00px;top:315px;font-size:13.5px;line-height:13.5px;letter-spacing:0.217px;">Gestão Cheque Troco</div>
<div class="r" style="left:30px;top:341px;width:11px;height:1px;background:repeating-linear-gradient(to right,#555 0 1px,transparent 1px 2px)"></div>
<svg style="left:43px;top:334px" width="15" height="14" viewBox="0 0 15 14"><defs><linearGradient id="lfg" x1="0" x2="1" y1="0" y2="0"><stop offset="0" stop-color="#cde0f2"/><stop offset="1" stop-color="#9fb2c6"/></linearGradient></defs><rect x="0" y="0" width="1" height="1" fill="#3fae3f"/><rect x="2" y="0" width="12" height="1" fill="url(#lfg)"/><rect x="0" y="2" width="1" height="1" fill="#3fae3f"/><rect x="2" y="2" width="12" height="1" fill="url(#lfg)"/><rect x="0" y="4" width="1" height="1" fill="#3fae3f"/><rect x="2" y="4" width="12" height="1" fill="url(#lfg)"/><rect x="0" y="6" width="1" height="1" fill="#3fae3f"/><rect x="2" y="6" width="12" height="1" fill="url(#lfg)"/><rect x="0" y="8" width="1" height="1" fill="#3fae3f"/><rect x="2" y="8" width="12" height="1" fill="url(#lfg)"/><rect x="0" y="10" width="1" height="1" fill="#3fae3f"/><rect x="2" y="10" width="12" height="1" fill="url(#lfg)"/><rect x="0" y="12" width="1" height="1" fill="#3fae3f"/><rect x="2" y="12" width="12" height="1" fill="url(#lfg)"/></svg>
<div class="t" style="left:62.00px;top:335px;font-size:13.5px;line-height:13.5px;letter-spacing:0.307px;">Gestão Cobrança</div>
<div class="r" style="left:30px;top:361px;width:11px;height:1px;background:repeating-linear-gradient(to right,#555 0 1px,transparent 1px 2px)"></div>
<svg style="left:43px;top:354px" width="15" height="14" viewBox="0 0 15 14"><defs><linearGradient id="lfg" x1="0" x2="1" y1="0" y2="0"><stop offset="0" stop-color="#cde0f2"/><stop offset="1" stop-color="#9fb2c6"/></linearGradient></defs><rect x="0" y="0" width="1" height="1" fill="#3fae3f"/><rect x="2" y="0" width="12" height="1" fill="url(#lfg)"/><rect x="0" y="2" width="1" height="1" fill="#3fae3f"/><rect x="2" y="2" width="12" height="1" fill="url(#lfg)"/><rect x="0" y="4" width="1" height="1" fill="#3fae3f"/><rect x="2" y="4" width="12" height="1" fill="url(#lfg)"/><rect x="0" y="6" width="1" height="1" fill="#3fae3f"/><rect x="2" y="6" width="12" height="1" fill="url(#lfg)"/><rect x="0" y="8" width="1" height="1" fill="#3fae3f"/><rect x="2" y="8" width="12" height="1" fill="url(#lfg)"/><rect x="0" y="10" width="1" height="1" fill="#3fae3f"/><rect x="2" y="10" width="12" height="1" fill="url(#lfg)"/><rect x="0" y="12" width="1" height="1" fill="#3fae3f"/><rect x="2" y="12" width="12" height="1" fill="url(#lfg)"/></svg>
<div class="t" style="left:62.00px;top:355px;font-size:13.5px;line-height:13.5px;letter-spacing:0.412px;">Gestão Empréstimos</div>
<div class="r" style="left:30px;top:381px;width:11px;height:1px;background:repeating-linear-gradient(to right,#555 0 1px,transparent 1px 2px)"></div>
<svg style="left:43px;top:374px" width="15" height="14" viewBox="0 0 15 14"><defs><linearGradient id="lfg" x1="0" x2="1" y1="0" y2="0"><stop offset="0" stop-color="#cde0f2"/><stop offset="1" stop-color="#9fb2c6"/></linearGradient></defs><rect x="0" y="0" width="1" height="1" fill="#3fae3f"/><rect x="2" y="0" width="12" height="1" fill="url(#lfg)"/><rect x="0" y="2" width="1" height="1" fill="#3fae3f"/><rect x="2" y="2" width="12" height="1" fill="url(#lfg)"/><rect x="0" y="4" width="1" height="1" fill="#3fae3f"/><rect x="2" y="4" width="12" height="1" fill="url(#lfg)"/><rect x="0" y="6" width="1" height="1" fill="#3fae3f"/><rect x="2" y="6" width="12" height="1" fill="url(#lfg)"/><rect x="0" y="8" width="1" height="1" fill="#3fae3f"/><rect x="2" y="8" width="12" height="1" fill="url(#lfg)"/><rect x="0" y="10" width="1" height="1" fill="#3fae3f"/><rect x="2" y="10" width="12" height="1" fill="url(#lfg)"/><rect x="0" y="12" width="1" height="1" fill="#3fae3f"/><rect x="2" y="12" width="12" height="1" fill="url(#lfg)"/></svg>
<div class="t" style="left:62.00px;top:375px;font-size:13.5px;line-height:13.5px;letter-spacing:0.412px;">Gestão Faturamento</div>
<div class="r" style="left:30px;top:401px;width:11px;height:1px;background:repeating-linear-gradient(to right,#555 0 1px,transparent 1px 2px)"></div>
<svg style="left:43px;top:394px" width="15" height="14" viewBox="0 0 15 14"><defs><linearGradient id="lfg" x1="0" x2="1" y1="0" y2="0"><stop offset="0" stop-color="#cde0f2"/><stop offset="1" stop-color="#9fb2c6"/></linearGradient></defs><rect x="0" y="0" width="1" height="1" fill="#3fae3f"/><rect x="2" y="0" width="12" height="1" fill="url(#lfg)"/><rect x="0" y="2" width="1" height="1" fill="#3fae3f"/><rect x="2" y="2" width="12" height="1" fill="url(#lfg)"/><rect x="0" y="4" width="1" height="1" fill="#3fae3f"/><rect x="2" y="4" width="12" height="1" fill="url(#lfg)"/><rect x="0" y="6" width="1" height="1" fill="#3fae3f"/><rect x="2" y="6" width="12" height="1" fill="url(#lfg)"/><rect x="0" y="8" width="1" height="1" fill="#3fae3f"/><rect x="2" y="8" width="12" height="1" fill="url(#lfg)"/><rect x="0" y="10" width="1" height="1" fill="#3fae3f"/><rect x="2" y="10" width="12" height="1" fill="url(#lfg)"/><rect x="0" y="12" width="1" height="1" fill="#3fae3f"/><rect x="2" y="12" width="12" height="1" fill="url(#lfg)"/></svg>
<div class="t" style="left:62.00px;top:395px;font-size:13.5px;line-height:13.5px;letter-spacing:0.404px;">Gestão Plataformas Digitais</div>
<div class="r" style="left:30px;top:421px;width:11px;height:1px;background:repeating-linear-gradient(to right,#555 0 1px,transparent 1px 2px)"></div>
<svg style="left:43px;top:414px" width="15" height="14" viewBox="0 0 15 14"><defs><linearGradient id="lfg" x1="0" x2="1" y1="0" y2="0"><stop offset="0" stop-color="#cde0f2"/><stop offset="1" stop-color="#9fb2c6"/></linearGradient></defs><rect x="0" y="0" width="1" height="1" fill="#3fae3f"/><rect x="2" y="0" width="12" height="1" fill="url(#lfg)"/><rect x="0" y="2" width="1" height="1" fill="#3fae3f"/><rect x="2" y="2" width="12" height="1" fill="url(#lfg)"/><rect x="0" y="4" width="1" height="1" fill="#3fae3f"/><rect x="2" y="4" width="12" height="1" fill="url(#lfg)"/><rect x="0" y="6" width="1" height="1" fill="#3fae3f"/><rect x="2" y="6" width="12" height="1" fill="url(#lfg)"/><rect x="0" y="8" width="1" height="1" fill="#3fae3f"/><rect x="2" y="8" width="12" height="1" fill="url(#lfg)"/><rect x="0" y="10" width="1" height="1" fill="#3fae3f"/><rect x="2" y="10" width="12" height="1" fill="url(#lfg)"/><rect x="0" y="12" width="1" height="1" fill="#3fae3f"/><rect x="2" y="12" width="12" height="1" fill="url(#lfg)"/></svg>
<div class="t" style="left:62.00px;top:415px;font-size:13.5px;line-height:13.5px;letter-spacing:0.400px;">Livro Eletrônico</div>
<div class="r" style="left:38px;top:441px;width:4px;height:1px;background:repeating-linear-gradient(to right,#555 0 1px,transparent 1px 2px)"></div>
<div class="r" style="left:22px;top:434px;width:15px;height:15px;border:1px solid #333;border-radius:2.5px;background:#f1f1f1"></div><div class="r" style="left:26px;top:441px;width:7px;height:2px;background:#333"></div><div class="r" style="left:28px;top:438px;width:2px;height:7px;background:#333"></div>
<svg style="left:42px;top:432px" width="16" height="16" viewBox="0 0 16 16"><defs><linearGradient id="fg" x1="0" y1="0" x2="0" y2="1"><stop offset="0" stop-color="#f6d3a8"/><stop offset="1" stop-color="#c98a4c"/></linearGradient></defs><path d="M0.5 2.5 Q0.5 1.5 1.5 1.5 L5.5 1.5 L7 3 L14.5 3 Q15.5 3 15.5 4 L15.5 14.5 Q15.5 15.5 14.5 15.5 L1.5 15.5 Q0.5 15.5 0.5 14.5 Z" fill="url(#fg)" stroke="#b87a40" stroke-width="1"/><path d="M1 6.5 L6 6.5 L7 5.5 L15 5.5" fill="none" stroke="#fbe6c8" stroke-width="1"/><path d="M1 7.5 L15 7.5" fill="none" stroke="#c58a52" stroke-width="0.7"/></svg>
<div class="t" style="left:62.00px;top:435px;font-size:13.5px;line-height:13.5px;letter-spacing:0.183px;">Caixa Central</div>
<div class="r" style="left:38px;top:461px;width:4px;height:1px;background:repeating-linear-gradient(to right,#555 0 1px,transparent 1px 2px)"></div>
<div class="r" style="left:22px;top:454px;width:15px;height:15px;border:1px solid #333;border-radius:2.5px;background:#f1f1f1"></div><div class="r" style="left:26px;top:461px;width:7px;height:2px;background:#333"></div><div class="r" style="left:28px;top:458px;width:2px;height:7px;background:#333"></div>
<svg style="left:42px;top:452px" width="16" height="16" viewBox="0 0 16 16"><defs><linearGradient id="fg" x1="0" y1="0" x2="0" y2="1"><stop offset="0" stop-color="#f6d3a8"/><stop offset="1" stop-color="#c98a4c"/></linearGradient></defs><path d="M0.5 2.5 Q0.5 1.5 1.5 1.5 L5.5 1.5 L7 3 L14.5 3 Q15.5 3 15.5 4 L15.5 14.5 Q15.5 15.5 14.5 15.5 L1.5 15.5 Q0.5 15.5 0.5 14.5 Z" fill="url(#fg)" stroke="#b87a40" stroke-width="1"/><path d="M1 6.5 L6 6.5 L7 5.5 L15 5.5" fill="none" stroke="#fbe6c8" stroke-width="1"/><path d="M1 7.5 L15 7.5" fill="none" stroke="#c58a52" stroke-width="0.7"/></svg>
<div class="t" style="left:62.00px;top:455px;font-size:13.5px;line-height:13.5px;letter-spacing:0.283px;">Cheques</div>
<div class="r" style="left:38px;top:481px;width:4px;height:1px;background:repeating-linear-gradient(to right,#555 0 1px,transparent 1px 2px)"></div>
<div class="r" style="left:22px;top:474px;width:15px;height:15px;border:1px solid #333;border-radius:2.5px;background:#f1f1f1"></div><div class="r" style="left:26px;top:481px;width:7px;height:2px;background:#333"></div>
<svg style="left:42px;top:472px" width="16" height="16" viewBox="0 0 16 16"><defs><linearGradient id="fg" x1="0" y1="0" x2="0" y2="1"><stop offset="0" stop-color="#f6d3a8"/><stop offset="1" stop-color="#c98a4c"/></linearGradient></defs><path d="M0.5 2.5 Q0.5 1.5 1.5 1.5 L5.5 1.5 L7 3 L14.5 3 Q15.5 3 15.5 4 L15.5 14.5 Q15.5 15.5 14.5 15.5 L1.5 15.5 Q0.5 15.5 0.5 14.5 Z" fill="url(#fg)" stroke="#b87a40" stroke-width="1"/><path d="M1 6.5 L6 6.5 L7 5.5 L15 5.5" fill="none" stroke="#fbe6c8" stroke-width="1"/><path d="M1 7.5 L15 7.5" fill="none" stroke="#c58a52" stroke-width="0.7"/></svg>
<div class="t" style="left:62.00px;top:475px;font-size:13.5px;line-height:13.5px;letter-spacing:0.357px;">Cadastro</div>
<div class="r" style="left:58px;top:501px;width:4px;height:1px;background:repeating-linear-gradient(to right,#555 0 1px,transparent 1px 2px)"></div>
<div class="r" style="left:42px;top:494px;width:15px;height:15px;border:1px solid #333;border-radius:2.5px;background:#f1f1f1"></div><div class="r" style="left:46px;top:501px;width:7px;height:2px;background:#333"></div><div class="r" style="left:48px;top:498px;width:2px;height:7px;background:#333"></div>
<svg style="left:62px;top:492px" width="16" height="16" viewBox="0 0 16 16"><defs><linearGradient id="fg" x1="0" y1="0" x2="0" y2="1"><stop offset="0" stop-color="#f6d3a8"/><stop offset="1" stop-color="#c98a4c"/></linearGradient></defs><path d="M0.5 2.5 Q0.5 1.5 1.5 1.5 L5.5 1.5 L7 3 L14.5 3 Q15.5 3 15.5 4 L15.5 14.5 Q15.5 15.5 14.5 15.5 L1.5 15.5 Q0.5 15.5 0.5 14.5 Z" fill="url(#fg)" stroke="#b87a40" stroke-width="1"/><path d="M1 6.5 L6 6.5 L7 5.5 L15 5.5" fill="none" stroke="#fbe6c8" stroke-width="1"/><path d="M1 7.5 L15 7.5" fill="none" stroke="#c58a52" stroke-width="0.7"/></svg>
<div class="t" style="left:82.00px;top:495px;font-size:13.5px;line-height:13.5px;letter-spacing:0.350px;">Cobrança Bancária</div>
<div class="r" style="left:50px;top:521px;width:11px;height:1px;background:repeating-linear-gradient(to right,#555 0 1px,transparent 1px 2px)"></div>
<svg style="left:63px;top:514px" width="15" height="14" viewBox="0 0 15 14"><defs><linearGradient id="lfg" x1="0" x2="1" y1="0" y2="0"><stop offset="0" stop-color="#cde0f2"/><stop offset="1" stop-color="#9fb2c6"/></linearGradient></defs><rect x="0" y="0" width="1" height="1" fill="#3fae3f"/><rect x="2" y="0" width="12" height="1" fill="url(#lfg)"/><rect x="0" y="2" width="1" height="1" fill="#3fae3f"/><rect x="2" y="2" width="12" height="1" fill="url(#lfg)"/><rect x="0" y="4" width="1" height="1" fill="#3fae3f"/><rect x="2" y="4" width="12" height="1" fill="url(#lfg)"/><rect x="0" y="6" width="1" height="1" fill="#3fae3f"/><rect x="2" y="6" width="12" height="1" fill="url(#lfg)"/><rect x="0" y="8" width="1" height="1" fill="#3fae3f"/><rect x="2" y="8" width="12" height="1" fill="url(#lfg)"/><rect x="0" y="10" width="1" height="1" fill="#3fae3f"/><rect x="2" y="10" width="12" height="1" fill="url(#lfg)"/><rect x="0" y="12" width="1" height="1" fill="#3fae3f"/><rect x="2" y="12" width="12" height="1" fill="url(#lfg)"/></svg>
<div class="t" style="left:82.00px;top:515px;font-size:13.5px;line-height:13.5px;letter-spacing:0.205px;">Ajustes Cadastro PDV</div>
<div class="r" style="left:50px;top:541px;width:11px;height:1px;background:repeating-linear-gradient(to right,#555 0 1px,transparent 1px 2px)"></div>
<svg style="left:63px;top:534px" width="15" height="14" viewBox="0 0 15 14"><defs><linearGradient id="lfg" x1="0" x2="1" y1="0" y2="0"><stop offset="0" stop-color="#cde0f2"/><stop offset="1" stop-color="#9fb2c6"/></linearGradient></defs><rect x="0" y="0" width="1" height="1" fill="#3fae3f"/><rect x="2" y="0" width="12" height="1" fill="url(#lfg)"/><rect x="0" y="2" width="1" height="1" fill="#3fae3f"/><rect x="2" y="2" width="12" height="1" fill="url(#lfg)"/><rect x="0" y="4" width="1" height="1" fill="#3fae3f"/><rect x="2" y="4" width="12" height="1" fill="url(#lfg)"/><rect x="0" y="6" width="1" height="1" fill="#3fae3f"/><rect x="2" y="6" width="12" height="1" fill="url(#lfg)"/><rect x="0" y="8" width="1" height="1" fill="#3fae3f"/><rect x="2" y="8" width="12" height="1" fill="url(#lfg)"/><rect x="0" y="10" width="1" height="1" fill="#3fae3f"/><rect x="2" y="10" width="12" height="1" fill="url(#lfg)"/><rect x="0" y="12" width="1" height="1" fill="#3fae3f"/><rect x="2" y="12" width="12" height="1" fill="url(#lfg)"/></svg>
<div class="t" style="left:82.00px;top:535px;font-size:13.5px;line-height:13.5px;letter-spacing:0.270px;">Ajustes Cadastro Pessoa/Cliente</div>
<div class="r" style="left:50px;top:561px;width:11px;height:1px;background:repeating-linear-gradient(to right,#555 0 1px,transparent 1px 2px)"></div>
<svg style="left:63px;top:554px" width="15" height="14" viewBox="0 0 15 14"><defs><linearGradient id="lfg" x1="0" x2="1" y1="0" y2="0"><stop offset="0" stop-color="#cde0f2"/><stop offset="1" stop-color="#9fb2c6"/></linearGradient></defs><rect x="0" y="0" width="1" height="1" fill="#3fae3f"/><rect x="2" y="0" width="12" height="1" fill="url(#lfg)"/><rect x="0" y="2" width="1" height="1" fill="#3fae3f"/><rect x="2" y="2" width="12" height="1" fill="url(#lfg)"/><rect x="0" y="4" width="1" height="1" fill="#3fae3f"/><rect x="2" y="4" width="12" height="1" fill="url(#lfg)"/><rect x="0" y="6" width="1" height="1" fill="#3fae3f"/><rect x="2" y="6" width="12" height="1" fill="url(#lfg)"/><rect x="0" y="8" width="1" height="1" fill="#3fae3f"/><rect x="2" y="8" width="12" height="1" fill="url(#lfg)"/><rect x="0" y="10" width="1" height="1" fill="#3fae3f"/><rect x="2" y="10" width="12" height="1" fill="url(#lfg)"/><rect x="0" y="12" width="1" height="1" fill="#3fae3f"/><rect x="2" y="12" width="12" height="1" fill="url(#lfg)"/></svg>
<div class="t" style="left:82.00px;top:555px;font-size:13.5px;line-height:13.5px;letter-spacing:0.400px;">Clientes</div>
<div class="r" style="left:50px;top:581px;width:11px;height:1px;background:repeating-linear-gradient(to right,#555 0 1px,transparent 1px 2px)"></div>
<svg style="left:63px;top:574px" width="15" height="14" viewBox="0 0 15 14"><defs><linearGradient id="lfg" x1="0" x2="1" y1="0" y2="0"><stop offset="0" stop-color="#cde0f2"/><stop offset="1" stop-color="#9fb2c6"/></linearGradient></defs><rect x="0" y="0" width="1" height="1" fill="#3fae3f"/><rect x="2" y="0" width="12" height="1" fill="url(#lfg)"/><rect x="0" y="2" width="1" height="1" fill="#3fae3f"/><rect x="2" y="2" width="12" height="1" fill="url(#lfg)"/><rect x="0" y="4" width="1" height="1" fill="#3fae3f"/><rect x="2" y="4" width="12" height="1" fill="url(#lfg)"/><rect x="0" y="6" width="1" height="1" fill="#3fae3f"/><rect x="2" y="6" width="12" height="1" fill="url(#lfg)"/><rect x="0" y="8" width="1" height="1" fill="#3fae3f"/><rect x="2" y="8" width="12" height="1" fill="url(#lfg)"/><rect x="0" y="10" width="1" height="1" fill="#3fae3f"/><rect x="2" y="10" width="12" height="1" fill="url(#lfg)"/><rect x="0" y="12" width="1" height="1" fill="#3fae3f"/><rect x="2" y="12" width="12" height="1" fill="url(#lfg)"/></svg>
<div class="t" style="left:82.00px;top:575px;font-size:13.5px;line-height:13.5px;letter-spacing:0.322px;">Setores de Cobrança</div>
<div class="r" style="left:50px;top:601px;width:11px;height:1px;background:repeating-linear-gradient(to right,#555 0 1px,transparent 1px 2px)"></div>
<svg style="left:63px;top:594px" width="15" height="14" viewBox="0 0 15 14"><defs><linearGradient id="lfg" x1="0" x2="1" y1="0" y2="0"><stop offset="0" stop-color="#cde0f2"/><stop offset="1" stop-color="#9fb2c6"/></linearGradient></defs><rect x="0" y="0" width="1" height="1" fill="#3fae3f"/><rect x="2" y="0" width="12" height="1" fill="url(#lfg)"/><rect x="0" y="2" width="1" height="1" fill="#3fae3f"/><rect x="2" y="2" width="12" height="1" fill="url(#lfg)"/><rect x="0" y="4" width="1" height="1" fill="#3fae3f"/><rect x="2" y="4" width="12" height="1" fill="url(#lfg)"/><rect x="0" y="6" width="1" height="1" fill="#3fae3f"/><rect x="2" y="6" width="12" height="1" fill="url(#lfg)"/><rect x="0" y="8" width="1" height="1" fill="#3fae3f"/><rect x="2" y="8" width="12" height="1" fill="url(#lfg)"/><rect x="0" y="10" width="1" height="1" fill="#3fae3f"/><rect x="2" y="10" width="12" height="1" fill="url(#lfg)"/><rect x="0" y="12" width="1" height="1" fill="#3fae3f"/><rect x="2" y="12" width="12" height="1" fill="url(#lfg)"/></svg>
<div class="t" style="left:82.00px;top:595px;font-size:13.5px;line-height:13.5px;letter-spacing:0.487px;">Contrato Cliente</div>
<div class="r" style="left:50px;top:621px;width:11px;height:1px;background:repeating-linear-gradient(to right,#555 0 1px,transparent 1px 2px)"></div>
<svg style="left:63px;top:614px" width="15" height="14" viewBox="0 0 15 14"><defs><linearGradient id="lfg" x1="0" x2="1" y1="0" y2="0"><stop offset="0" stop-color="#cde0f2"/><stop offset="1" stop-color="#9fb2c6"/></linearGradient></defs><rect x="0" y="0" width="1" height="1" fill="#3fae3f"/><rect x="2" y="0" width="12" height="1" fill="url(#lfg)"/><rect x="0" y="2" width="1" height="1" fill="#3fae3f"/><rect x="2" y="2" width="12" height="1" fill="url(#lfg)"/><rect x="0" y="4" width="1" height="1" fill="#3fae3f"/><rect x="2" y="4" width="12" height="1" fill="url(#lfg)"/><rect x="0" y="6" width="1" height="1" fill="#3fae3f"/><rect x="2" y="6" width="12" height="1" fill="url(#lfg)"/><rect x="0" y="8" width="1" height="1" fill="#3fae3f"/><rect x="2" y="8" width="12" height="1" fill="url(#lfg)"/><rect x="0" y="10" width="1" height="1" fill="#3fae3f"/><rect x="2" y="10" width="12" height="1" fill="url(#lfg)"/><rect x="0" y="12" width="1" height="1" fill="#3fae3f"/><rect x="2" y="12" width="12" height="1" fill="url(#lfg)"/></svg>
<div class="t" style="left:82.00px;top:615px;font-size:13.5px;line-height:13.5px;letter-spacing:0.400px;">Convênio</div>
<div class="r" style="left:50px;top:641px;width:11px;height:1px;background:repeating-linear-gradient(to right,#555 0 1px,transparent 1px 2px)"></div>
<svg style="left:63px;top:634px" width="15" height="14" viewBox="0 0 15 14"><defs><linearGradient id="lfg" x1="0" x2="1" y1="0" y2="0"><stop offset="0" stop-color="#cde0f2"/><stop offset="1" stop-color="#9fb2c6"/></linearGradient></defs><rect x="0" y="0" width="1" height="1" fill="#3fae3f"/><rect x="2" y="0" width="12" height="1" fill="url(#lfg)"/><rect x="0" y="2" width="1" height="1" fill="#3fae3f"/><rect x="2" y="2" width="12" height="1" fill="url(#lfg)"/><rect x="0" y="4" width="1" height="1" fill="#3fae3f"/><rect x="2" y="4" width="12" height="1" fill="url(#lfg)"/><rect x="0" y="6" width="1" height="1" fill="#3fae3f"/><rect x="2" y="6" width="12" height="1" fill="url(#lfg)"/><rect x="0" y="8" width="1" height="1" fill="#3fae3f"/><rect x="2" y="8" width="12" height="1" fill="url(#lfg)"/><rect x="0" y="10" width="1" height="1" fill="#3fae3f"/><rect x="2" y="10" width="12" height="1" fill="url(#lfg)"/><rect x="0" y="12" width="1" height="1" fill="#3fae3f"/><rect x="2" y="12" width="12" height="1" fill="url(#lfg)"/></svg>
<div class="t" style="left:82.00px;top:635px;font-size:13.5px;line-height:13.5px;letter-spacing:0.328px;">Formas de Pagamento</div>
<div class="r" style="left:50px;top:661px;width:11px;height:1px;background:repeating-linear-gradient(to right,#555 0 1px,transparent 1px 2px)"></div>
<svg style="left:63px;top:654px" width="15" height="14" viewBox="0 0 15 14"><defs><linearGradient id="lfg" x1="0" x2="1" y1="0" y2="0"><stop offset="0" stop-color="#cde0f2"/><stop offset="1" stop-color="#9fb2c6"/></linearGradient></defs><rect x="0" y="0" width="1" height="1" fill="#3fae3f"/><rect x="2" y="0" width="12" height="1" fill="url(#lfg)"/><rect x="0" y="2" width="1" height="1" fill="#3fae3f"/><rect x="2" y="2" width="12" height="1" fill="url(#lfg)"/><rect x="0" y="4" width="1" height="1" fill="#3fae3f"/><rect x="2" y="4" width="12" height="1" fill="url(#lfg)"/><rect x="0" y="6" width="1" height="1" fill="#3fae3f"/><rect x="2" y="6" width="12" height="1" fill="url(#lfg)"/><rect x="0" y="8" width="1" height="1" fill="#3fae3f"/><rect x="2" y="8" width="12" height="1" fill="url(#lfg)"/><rect x="0" y="10" width="1" height="1" fill="#3fae3f"/><rect x="2" y="10" width="12" height="1" fill="url(#lfg)"/><rect x="0" y="12" width="1" height="1" fill="#3fae3f"/><rect x="2" y="12" width="12" height="1" fill="url(#lfg)"/></svg>
<div class="t" style="left:82.00px;top:655px;font-size:13.5px;line-height:13.5px;letter-spacing:0.409px;">Modalidade de Desembolso</div>
<div class="r" style="left:50px;top:681px;width:11px;height:1px;background:repeating-linear-gradient(to right,#555 0 1px,transparent 1px 2px)"></div>
<svg style="left:63px;top:674px" width="15" height="14" viewBox="0 0 15 14"><defs><linearGradient id="lfg" x1="0" x2="1" y1="0" y2="0"><stop offset="0" stop-color="#cde0f2"/><stop offset="1" stop-color="#9fb2c6"/></linearGradient></defs><rect x="0" y="0" width="1" height="1" fill="#3fae3f"/><rect x="2" y="0" width="12" height="1" fill="url(#lfg)"/><rect x="0" y="2" width="1" height="1" fill="#3fae3f"/><rect x="2" y="2" width="12" height="1" fill="url(#lfg)"/><rect x="0" y="4" width="1" height="1" fill="#3fae3f"/><rect x="2" y="4" width="12" height="1" fill="url(#lfg)"/><rect x="0" y="6" width="1" height="1" fill="#3fae3f"/><rect x="2" y="6" width="12" height="1" fill="url(#lfg)"/><rect x="0" y="8" width="1" height="1" fill="#3fae3f"/><rect x="2" y="8" width="12" height="1" fill="url(#lfg)"/><rect x="0" y="10" width="1" height="1" fill="#3fae3f"/><rect x="2" y="10" width="12" height="1" fill="url(#lfg)"/><rect x="0" y="12" width="1" height="1" fill="#3fae3f"/><rect x="2" y="12" width="12" height="1" fill="url(#lfg)"/></svg>
<div class="t" style="left:82.00px;top:675px;font-size:13.5px;line-height:13.5px;letter-spacing:0.481px;">Motivo Devolução Documentos</div>
<div class="r" style="left:50px;top:701px;width:11px;height:1px;background:repeating-linear-gradient(to right,#555 0 1px,transparent 1px 2px)"></div>
<svg style="left:63px;top:694px" width="15" height="14" viewBox="0 0 15 14"><defs><linearGradient id="lfg" x1="0" x2="1" y1="0" y2="0"><stop offset="0" stop-color="#cde0f2"/><stop offset="1" stop-color="#9fb2c6"/></linearGradient></defs><rect x="0" y="0" width="1" height="1" fill="#3fae3f"/><rect x="2" y="0" width="12" height="1" fill="url(#lfg)"/><rect x="0" y="2" width="1" height="1" fill="#3fae3f"/><rect x="2" y="2" width="12" height="1" fill="url(#lfg)"/><rect x="0" y="4" width="1" height="1" fill="#3fae3f"/><rect x="2" y="4" width="12" height="1" fill="url(#lfg)"/><rect x="0" y="6" width="1" height="1" fill="#3fae3f"/><rect x="2" y="6" width="12" height="1" fill="url(#lfg)"/><rect x="0" y="8" width="1" height="1" fill="#3fae3f"/><rect x="2" y="8" width="12" height="1" fill="url(#lfg)"/><rect x="0" y="10" width="1" height="1" fill="#3fae3f"/><rect x="2" y="10" width="12" height="1" fill="url(#lfg)"/><rect x="0" y="12" width="1" height="1" fill="#3fae3f"/><rect x="2" y="12" width="12" height="1" fill="url(#lfg)"/></svg>
<div class="t" style="left:82.00px;top:695px;font-size:13.5px;line-height:13.5px;letter-spacing:0.332px;">Ocorrências de Cobrança</div>
<div class="r" style="left:50px;top:721px;width:11px;height:1px;background:repeating-linear-gradient(to right,#555 0 1px,transparent 1px 2px)"></div>
<svg style="left:63px;top:714px" width="15" height="14" viewBox="0 0 15 14"><defs><linearGradient id="lfg" x1="0" x2="1" y1="0" y2="0"><stop offset="0" stop-color="#cde0f2"/><stop offset="1" stop-color="#9fb2c6"/></linearGradient></defs><rect x="0" y="0" width="1" height="1" fill="#3fae3f"/><rect x="2" y="0" width="12" height="1" fill="url(#lfg)"/><rect x="0" y="2" width="1" height="1" fill="#3fae3f"/><rect x="2" y="2" width="12" height="1" fill="url(#lfg)"/><rect x="0" y="4" width="1" height="1" fill="#3fae3f"/><rect x="2" y="4" width="12" height="1" fill="url(#lfg)"/><rect x="0" y="6" width="1" height="1" fill="#3fae3f"/><rect x="2" y="6" width="12" height="1" fill="url(#lfg)"/><rect x="0" y="8" width="1" height="1" fill="#3fae3f"/><rect x="2" y="8" width="12" height="1" fill="url(#lfg)"/><rect x="0" y="10" width="1" height="1" fill="#3fae3f"/><rect x="2" y="10" width="12" height="1" fill="url(#lfg)"/><rect x="0" y="12" width="1" height="1" fill="#3fae3f"/><rect x="2" y="12" width="12" height="1" fill="url(#lfg)"/></svg>
<div class="t" style="left:82.00px;top:715px;font-size:13.5px;line-height:13.5px;letter-spacing:0.373px;">Parâmentros de Parcelamento</div>
<div class="r" style="left:50px;top:741px;width:11px;height:1px;background:repeating-linear-gradient(to right,#555 0 1px,transparent 1px 2px)"></div>
<svg style="left:63px;top:734px" width="15" height="14" viewBox="0 0 15 14"><defs><linearGradient id="lfg" x1="0" x2="1" y1="0" y2="0"><stop offset="0" stop-color="#cde0f2"/><stop offset="1" stop-color="#9fb2c6"/></linearGradient></defs><rect x="0" y="0" width="1" height="1" fill="#3fae3f"/><rect x="2" y="0" width="12" height="1" fill="url(#lfg)"/><rect x="0" y="2" width="1" height="1" fill="#3fae3f"/><rect x="2" y="2" width="12" height="1" fill="url(#lfg)"/><rect x="0" y="4" width="1" height="1" fill="#3fae3f"/><rect x="2" y="4" width="12" height="1" fill="url(#lfg)"/><rect x="0" y="6" width="1" height="1" fill="#3fae3f"/><rect x="2" y="6" width="12" height="1" fill="url(#lfg)"/><rect x="0" y="8" width="1" height="1" fill="#3fae3f"/><rect x="2" y="8" width="12" height="1" fill="url(#lfg)"/><rect x="0" y="10" width="1" height="1" fill="#3fae3f"/><rect x="2" y="10" width="12" height="1" fill="url(#lfg)"/><rect x="0" y="12" width="1" height="1" fill="#3fae3f"/><rect x="2" y="12" width="12" height="1" fill="url(#lfg)"/></svg>
<div class="r" style="left:81px;top:731px;width:90px;height:20px;background:#30568b"></div>
<div class="t" style="left:82.00px;top:735px;font-size:13.5px;line-height:13.5px;color:#fff;letter-spacing:0.109px;">Caixa/Bancos</div>
<div class="r" style="left:50px;top:761px;width:11px;height:1px;background:repeating-linear-gradient(to right,#555 0 1px,transparent 1px 2px)"></div>
<svg style="left:63px;top:754px" width="15" height="14" viewBox="0 0 15 14"><defs><linearGradient id="lfg" x1="0" x2="1" y1="0" y2="0"><stop offset="0" stop-color="#cde0f2"/><stop offset="1" stop-color="#9fb2c6"/></linearGradient></defs><rect x="0" y="0" width="1" height="1" fill="#3fae3f"/><rect x="2" y="0" width="12" height="1" fill="url(#lfg)"/><rect x="0" y="2" width="1" height="1" fill="#3fae3f"/><rect x="2" y="2" width="12" height="1" fill="url(#lfg)"/><rect x="0" y="4" width="1" height="1" fill="#3fae3f"/><rect x="2" y="4" width="12" height="1" fill="url(#lfg)"/><rect x="0" y="6" width="1" height="1" fill="#3fae3f"/><rect x="2" y="6" width="12" height="1" fill="url(#lfg)"/><rect x="0" y="8" width="1" height="1" fill="#3fae3f"/><rect x="2" y="8" width="12" height="1" fill="url(#lfg)"/><rect x="0" y="10" width="1" height="1" fill="#3fae3f"/><rect x="2" y="10" width="12" height="1" fill="url(#lfg)"/><rect x="0" y="12" width="1" height="1" fill="#3fae3f"/><rect x="2" y="12" width="12" height="1" fill="url(#lfg)"/></svg>
<div class="t" style="left:82.00px;top:755px;font-size:13.5px;line-height:13.5px;letter-spacing:0.235px;">Tipos Débitos Cliente</div>
<div class="r" style="left:50px;top:781px;width:11px;height:1px;background:repeating-linear-gradient(to right,#555 0 1px,transparent 1px 2px)"></div>
<svg style="left:63px;top:774px" width="15" height="14" viewBox="0 0 15 14"><defs><linearGradient id="lfg" x1="0" x2="1" y1="0" y2="0"><stop offset="0" stop-color="#cde0f2"/><stop offset="1" stop-color="#9fb2c6"/></linearGradient></defs><rect x="0" y="0" width="1" height="1" fill="#3fae3f"/><rect x="2" y="0" width="12" height="1" fill="url(#lfg)"/><rect x="0" y="2" width="1" height="1" fill="#3fae3f"/><rect x="2" y="2" width="12" height="1" fill="url(#lfg)"/><rect x="0" y="4" width="1" height="1" fill="#3fae3f"/><rect x="2" y="4" width="12" height="1" fill="url(#lfg)"/><rect x="0" y="6" width="1" height="1" fill="#3fae3f"/><rect x="2" y="6" width="12" height="1" fill="url(#lfg)"/><rect x="0" y="8" width="1" height="1" fill="#3fae3f"/><rect x="2" y="8" width="12" height="1" fill="url(#lfg)"/><rect x="0" y="10" width="1" height="1" fill="#3fae3f"/><rect x="2" y="10" width="12" height="1" fill="url(#lfg)"/><rect x="0" y="12" width="1" height="1" fill="#3fae3f"/><rect x="2" y="12" width="12" height="1" fill="url(#lfg)"/></svg>
<div class="t" style="left:82.00px;top:775px;font-size:13.5px;line-height:13.5px;letter-spacing:0.114px;">Regras de Preço</div>
<div class="r" style="left:50px;top:801px;width:11px;height:1px;background:repeating-linear-gradient(to right,#555 0 1px,transparent 1px 2px)"></div>
<svg style="left:63px;top:794px" width="15" height="14" viewBox="0 0 15 14"><defs><linearGradient id="lfg" x1="0" x2="1" y1="0" y2="0"><stop offset="0" stop-color="#cde0f2"/><stop offset="1" stop-color="#9fb2c6"/></linearGradient></defs><rect x="0" y="0" width="1" height="1" fill="#3fae3f"/><rect x="2" y="0" width="12" height="1" fill="url(#lfg)"/><rect x="0" y="2" width="1" height="1" fill="#3fae3f"/><rect x="2" y="2" width="12" height="1" fill="url(#lfg)"/><rect x="0" y="4" width="1" height="1" fill="#3fae3f"/><rect x="2" y="4" width="12" height="1" fill="url(#lfg)"/><rect x="0" y="6" width="1" height="1" fill="#3fae3f"/><rect x="2" y="6" width="12" height="1" fill="url(#lfg)"/><rect x="0" y="8" width="1" height="1" fill="#3fae3f"/><rect x="2" y="8" width="12" height="1" fill="url(#lfg)"/><rect x="0" y="10" width="1" height="1" fill="#3fae3f"/><rect x="2" y="10" width="12" height="1" fill="url(#lfg)"/><rect x="0" y="12" width="1" height="1" fill="#3fae3f"/><rect x="2" y="12" width="12" height="1" fill="url(#lfg)"/></svg>
<div class="t" style="left:82.00px;top:795px;font-size:13.5px;line-height:13.5px;letter-spacing:0.304px;">Mensagens e-Mails de Cobrança</div>
<div class="r" style="left:50px;top:821px;width:11px;height:1px;background:repeating-linear-gradient(to right,#555 0 1px,transparent 1px 2px)"></div>
<svg style="left:63px;top:814px" width="15" height="14" viewBox="0 0 15 14"><defs><linearGradient id="lfg" x1="0" x2="1" y1="0" y2="0"><stop offset="0" stop-color="#cde0f2"/><stop offset="1" stop-color="#9fb2c6"/></linearGradient></defs><rect x="0" y="0" width="1" height="1" fill="#3fae3f"/><rect x="2" y="0" width="12" height="1" fill="url(#lfg)"/><rect x="0" y="2" width="1" height="1" fill="#3fae3f"/><rect x="2" y="2" width="12" height="1" fill="url(#lfg)"/><rect x="0" y="4" width="1" height="1" fill="#3fae3f"/><rect x="2" y="4" width="12" height="1" fill="url(#lfg)"/><rect x="0" y="6" width="1" height="1" fill="#3fae3f"/><rect x="2" y="6" width="12" height="1" fill="url(#lfg)"/><rect x="0" y="8" width="1" height="1" fill="#3fae3f"/><rect x="2" y="8" width="12" height="1" fill="url(#lfg)"/><rect x="0" y="10" width="1" height="1" fill="#3fae3f"/><rect x="2" y="10" width="12" height="1" fill="url(#lfg)"/><rect x="0" y="12" width="1" height="1" fill="#3fae3f"/><rect x="2" y="12" width="12" height="1" fill="url(#lfg)"/></svg>
<div class="t" style="left:82.00px;top:815px;font-size:13.5px;line-height:13.5px;letter-spacing:0.224px;">Cadastro de Ponto de Pré-Venda</div>
<div class="r" style="left:50px;top:841px;width:11px;height:1px;background:repeating-linear-gradient(to right,#555 0 1px,transparent 1px 2px)"></div>
<svg style="left:63px;top:834px" width="15" height="14" viewBox="0 0 15 14"><defs><linearGradient id="lfg" x1="0" x2="1" y1="0" y2="0"><stop offset="0" stop-color="#cde0f2"/><stop offset="1" stop-color="#9fb2c6"/></linearGradient></defs><rect x="0" y="0" width="1" height="1" fill="#3fae3f"/><rect x="2" y="0" width="12" height="1" fill="url(#lfg)"/><rect x="0" y="2" width="1" height="1" fill="#3fae3f"/><rect x="2" y="2" width="12" height="1" fill="url(#lfg)"/><rect x="0" y="4" width="1" height="1" fill="#3fae3f"/><rect x="2" y="4" width="12" height="1" fill="url(#lfg)"/><rect x="0" y="6" width="1" height="1" fill="#3fae3f"/><rect x="2" y="6" width="12" height="1" fill="url(#lfg)"/><rect x="0" y="8" width="1" height="1" fill="#3fae3f"/><rect x="2" y="8" width="12" height="1" fill="url(#lfg)"/><rect x="0" y="10" width="1" height="1" fill="#3fae3f"/><rect x="2" y="10" width="12" height="1" fill="url(#lfg)"/><rect x="0" y="12" width="1" height="1" fill="#3fae3f"/><rect x="2" y="12" width="12" height="1" fill="url(#lfg)"/></svg>
<div class="t" style="left:82.00px;top:835px;font-size:13.5px;line-height:13.5px;letter-spacing:0.353px;">Cadastro de Ponto de Ordem de Serviço</div>
<div class="r" style="left:50px;top:861px;width:11px;height:1px;background:repeating-linear-gradient(to right,#555 0 1px,transparent 1px 2px)"></div>
<svg style="left:63px;top:854px" width="15" height="14" viewBox="0 0 15 14"><defs><linearGradient id="lfg" x1="0" x2="1" y1="0" y2="0"><stop offset="0" stop-color="#cde0f2"/><stop offset="1" stop-color="#9fb2c6"/></linearGradient></defs><rect x="0" y="0" width="1" height="1" fill="#3fae3f"/><rect x="2" y="0" width="12" height="1" fill="url(#lfg)"/><rect x="0" y="2" width="1" height="1" fill="#3fae3f"/><rect x="2" y="2" width="12" height="1" fill="url(#lfg)"/><rect x="0" y="4" width="1" height="1" fill="#3fae3f"/><rect x="2" y="4" width="12" height="1" fill="url(#lfg)"/><rect x="0" y="6" width="1" height="1" fill="#3fae3f"/><rect x="2" y="6" width="12" height="1" fill="url(#lfg)"/><rect x="0" y="8" width="1" height="1" fill="#3fae3f"/><rect x="2" y="8" width="12" height="1" fill="url(#lfg)"/><rect x="0" y="10" width="1" height="1" fill="#3fae3f"/><rect x="2" y="10" width="12" height="1" fill="url(#lfg)"/><rect x="0" y="12" width="1" height="1" fill="#3fae3f"/><rect x="2" y="12" width="12" height="1" fill="url(#lfg)"/></svg>
<div class="t" style="left:82.00px;top:855px;font-size:13.5px;line-height:13.5px;letter-spacing:0.289px;">Parâmetros Financeiro Empresa</div>
<div class="r" style="left:381px;top:111px;width:1px;height:761px;background:#6e6e6e"></div>
<div class="r" style="left:382px;top:111px;width:15px;height:761px;background:#dcdcdc"></div>
<div class="r" style="left:382px;top:111px;width:15px;height:15px;background:linear-gradient(135deg,#ffffff 50%,#d8d8d8)"></div>
<div class="r" style="left:382px;top:126px;width:15px;height:1px;background:#6e6e6e"></div>
<svg style="left:382px;top:111px" width="15" height="15"><path d="M3 10 L11.5 10 L7.25 5 Z" fill="#000"/></svg>
<div class="r" style="left:382px;top:127px;width:15px;height:100px;background:#c3d4e9;border-left:1px solid #fff;border-right:1px solid #9fb3cc"></div>
<svg style="left:384px;top:130px" width="11" height="64"><defs><pattern id="p384_130" width="4" height="4" patternUnits="userSpaceOnUse"><rect x="1" y="1" width="1" height="1" fill="#4a4a4a"/><rect x="0" y="0" width="1" height="1" fill="#ffffff"/><rect x="3" y="3" width="1" height="1" fill="#4a4a4a"/><rect x="2" y="2" width="1" height="1" fill="#ffffff"/></pattern></defs><rect width="11" height="64" fill="url(#p384_130)"/></svg>
<div class="r" style="left:321px;top:191px;width:909px;height:652px;background:#fff;border-radius:10px 10px 0 0;box-shadow:0 0 0 1px rgba(0,0,0,0.25),0 2px 12px 1px rgba(0,0,0,0.25)"></div>
<div class="r" style="left:321px;top:191px;width:909px;height:37px;background:#fafafa;border-radius:10px 10px 0 0"></div>
<div class="r" style="left:321px;top:227px;width:909px;height:1px;background:#e2e2e2"></div>
<div class="t" style="left:680.00px;top:203px;font-size:14px;line-height:14px;font-weight:bold;color:#505050;letter-spacing:0.258px;">Cadastro de Caixas/Bancos</div>
<svg style="left:1207px;top:204px" width="10" height="10"><path d="M1.5 1.5 L8.5 8.5 M8.5 1.5 L1.5 8.5" stroke="#3c3c3c" stroke-width="1.3"/></svg>
<div class="r" style="left:321px;top:228px;width:907px;height:28px;background:#6d8a80"></div>
<div class="r" style="left:1228px;top:228px;width:2px;height:2px;background:#6d8a80"></div>
<div class="r" style="left:323px;top:230px;width:905px;height:26px;background:#c4e0d4"></div>
<div class="r" style="left:321px;top:256px;width:2px;height:1px;background:#fff"></div>
<svg style="left:327px;top:236px" width="15" height="15"><defs><radialGradient id="rg" cx="0.35" cy="0.3" r="0.8"><stop offset="0" stop-color="#ffffff"/><stop offset="1" stop-color="#dcdcdc"/></radialGradient></defs><circle cx="7.2" cy="7.3" r="6.2" fill="url(#rg)" stroke="#7a7a7a" stroke-width="1"/></svg>
<svg style="left:405px;top:236px" width="15" height="15"><circle cx="7.4" cy="7.3" r="6.2" fill="url(#rg)" stroke="#7a7a7a" stroke-width="1"/><circle cx="7.4" cy="7.3" r="2.2" fill="#5a5a5a"/></svg>
<div class="t" style="left:345.50px;top:238px;font-size:11.5px;line-height:11.5px;letter-spacing:0.386px;"><u>I</u>nclusão</div>
<div class="t" style="left:423.00px;top:238px;font-size:11.5px;line-height:11.5px;letter-spacing:0.475px;"><u>A</u>lteração</div>
<div class="t" style="left:491.50px;top:238px;font-size:11.5px;line-height:11.5px;font-weight:bold;color:#2f2ff0;letter-spacing:0.915px;">(MATRIZ)201 - BRADESCO - 3708-7 / 10-8 -&gt; CAIXA MODELO ANTIGO - Configuração no Caixa</div>
<svg style="left:1204px;top:233px" width="20" height="19" viewBox="0 0 20 19"><defs><linearGradient id="ig" x1="0" y1="0" x2="1" y2="1"><stop offset="0" stop-color="#8a3030"/><stop offset="0.3" stop-color="#c9a0a0"/><stop offset="0.7" stop-color="#a06060"/><stop offset="1" stop-color="#5a1010"/></linearGradient></defs><rect x="0" y="0" width="20" height="19" fill="#0a0a0a"/><rect x="1.5" y="1" width="17.5" height="17" rx="2" fill="url(#ig)" stroke="#f4e8e8" stroke-width="0.8"/><circle cx="10" cy="9" r="5.6" fill="none" stroke="#fff" stroke-width="1.6"/><path d="M10 5 V16" stroke="#fff" stroke-width="1.6"/></svg>
<svg style="left:326px;top:263px" width="52" height="16"><path d="M0 15 L1 0 L46 0 L51 15 Z" fill="#e6e6e6"/><path d="M45.5 0.5 L50.5 15" stroke="#a3ccc5" stroke-width="1" fill="none"/></svg>
<div class="t" style="left:333.00px;top:265px;font-size:11.5px;line-height:11.5px;letter-spacing:0.525px;">Dados</div>
<svg style="left:377px;top:263px" width="62" height="16"><path d="M0 15 L1 0 L56 0 L61 15 Z" fill="#e6e6e6"/><path d="M55.5 0.5 L60.5 15" stroke="#a3ccc5" stroke-width="1" fill="none"/></svg>
<div class="t" style="left:381.00px;top:265px;font-size:11.5px;line-height:11.5px;letter-spacing:0.429px;">Usuários</div>
<svg style="left:436px;top:261px" width="162" height="19"><path d="M0 18.5 L3.5 0.5 L159 0.5 L161.5 18.5 Z" fill="#a3ccc5"/></svg>
<div class="t" style="left:445.00px;top:264px;font-size:11.5px;line-height:11.5px;letter-spacing:0.468px;">Remessa/Retorno/Extrato</div>
<svg style="left:597px;top:263px" width="113" height="16"><path d="M0 15 L1 0 L107 0 L112 15 Z" fill="#e6e6e6"/><path d="M106.5 0.5 L111.5 15" stroke="#a3ccc5" stroke-width="1" fill="none"/></svg>
<div class="t" style="left:601.50px;top:265px;font-size:11.5px;line-height:11.5px;letter-spacing:0.467px;">Contas Contábeis</div>
<svg style="left:709px;top:263px" width="165" height="16"><path d="M0 15 L1 0 L159 0 L164 15 Z" fill="#e6e6e6"/><path d="M158.5 0.5 L163.5 15" stroke="#a3ccc5" stroke-width="1" fill="none"/></svg>
<div class="t" style="left:734.50px;top:265px;font-size:11.5px;line-height:11.5px;letter-spacing:0.550px;">Histórico de Alterações</div>
<svg style="left:714px;top:264px" width="15" height="14"><rect x="0.5" y="0.5" width="14" height="13" fill="#e6fbfb" stroke="#000" stroke-width="1"/><path d="M2.5 3 H6.5 M4.5 3 V10.5 H6 M6.5 5.5 H12 M6.5 8 H12 M6.5 10.5 H12 M8 3 H12" stroke="#000" stroke-width="1"/></svg>
<div class="r" style="left:322px;top:279px;width:908px;height:1px;background:#a3ccc5"></div>
<div class="r" style="left:322px;top:279px;width:1px;height:525px;background:#a3ccc5"></div>
<div class="r" style="left:1227px;top:279px;width:3px;height:528px;background:#a3ccc5"></div>
<div class="r" style="left:321px;top:804px;width:909px;height:3px;background:#a3ccc5"></div>
<div class="r" style="left:326px;top:283px;width:896px;height:516px;border:1px solid #a9a9a9"></div>
<div class="r" style="left:1221px;top:285px;width:1px;height:319px;background:#fff"></div>
<div class="r" style="left:331px;top:292px;width:889px;height:181px;border:1px solid #a9a9a9"></div>
<div class="r" style="left:334px;top:291px;width:263px;height:3px;background:#fff"></div>
<div class="t" style="left:336.50px;top:286px;font-size:13.5px;line-height:13.5px;font-weight:bold;color:#4f4a55;letter-spacing:0.726px;">Dados Lotes Pagamento Fornecedor</div>
<div class="r" style="left:331px;top:482px;width:889px;height:56px;border:1px solid #a9a9a9"></div>
<div class="r" style="left:334px;top:481px;width:162px;height:3px;background:#fff"></div>
<div class="t" style="left:336.50px;top:476px;font-size:13.5px;line-height:13.5px;font-weight:bold;color:#4f4a55;letter-spacing:0.462px;">Extrato Bancário - OFX</div>
<div class="r" style="left:331px;top:547px;width:889px;height:56px;border:1px solid #a9a9a9"></div>
<div class="r" style="left:334px;top:546px;width:202px;height:3px;background:#fff"></div>
<div class="t" style="left:336.50px;top:541px;font-size:13.5px;line-height:13.5px;font-weight:bold;color:#4f4a55;letter-spacing:0.604px;">Extrato Bancário - Febraban</div>
<div class="t" style="left:338.00px;top:307px;font-size:13px;line-height:13px;letter-spacing:0.371px;">Convenio Pgto Forneced...</div>
<div class="r" style="left:508px;top:303px;width:100px;height:20px;border:1px solid #8c8c8c;background:#fff"></div>
<div class="t" style="left:511.00px;top:307px;font-size:12px;line-height:12px;letter-spacing:0.940px;">420115</div>
<div class="t" style="left:338.00px;top:329px;font-size:13px;line-height:13px;letter-spacing:0.207px;">Proximo Remessa:</div>
<div class="r" style="left:508px;top:325px;width:70px;height:20px;border:1px solid #8c8c8c;background:#fff"></div>
<div class="t" style="left:511.00px;top:329px;font-size:12px;line-height:12px;letter-spacing:1.167px;">2811</div>
<div class="t" style="left:656.00px;top:329px;font-size:13px;line-height:13px;letter-spacing:0.287px;">Proximo Retorno:</div>
<div class="r" style="left:768px;top:325px;width:70px;height:20px;border:1px solid #8c8c8c;background:#fff"></div>
<div class="t" style="left:771.00px;top:329px;font-size:12px;line-height:12px;">0</div>
<div class="t" style="left:338.00px;top:351px;font-size:13px;line-height:13px;letter-spacing:0.439px;">Ultimo Arq. Gerado:</div>
<div class="r" style="left:508px;top:347px;width:330px;height:20px;border:1px solid #8c8c8c;background:#fff"></div>
<div class="t" style="left:511.00px;top:351px;font-size:12px;line-height:12px;letter-spacing:0.327px;">s/jpostoredes/bin/O:/Bradesco/Remessa/PG251101.REM</div>
<div class="t" style="left:338.00px;top:373px;font-size:13px;line-height:13px;letter-spacing:0.341px;">Diretório Remessa:</div>
<div class="r" style="left:508px;top:369px;width:330px;height:20px;border:1px solid #8c8c8c;background:#e6e6e6"></div>
<div class="t" style="left:511.00px;top:373px;font-size:12px;line-height:12px;letter-spacing:0.278px;">O:/Bradesco/Remessa</div>
<div class="r" style="left:843px;top:369px;width:22px;height:20px;border:1px solid #7b7b7b;border-radius:3px;background:linear-gradient(160deg,#f4fbfa 0%,#dde9e7 50%,#b9cac7 100%)"></div>
<svg style="left:843px;top:369px" width="22" height="20"><rect x="6.5" y="12" width="1.2" height="1.2" fill="#333"/><rect x="10.4" y="12" width="1.2" height="1.2" fill="#333"/><rect x="14.3" y="12" width="1.2" height="1.2" fill="#333"/></svg>
<div class="t" style="left:338.00px;top:395px;font-size:13px;line-height:13px;letter-spacing:0.389px;">Diretório Retornos:</div>
<div class="r" style="left:508px;top:391px;width:330px;height:20px;border:1px solid #8c8c8c;background:#e6e6e6"></div>
<div class="t" style="left:511.00px;top:395px;font-size:12px;line-height:12px;letter-spacing:0.339px;">O:/Bradesco/Retorno</div>
<div class="r" style="left:843px;top:391px;width:22px;height:20px;border:1px solid #7b7b7b;border-radius:3px;background:linear-gradient(160deg,#f4fbfa 0%,#dde9e7 50%,#b9cac7 100%)"></div>
<svg style="left:843px;top:391px" width="22" height="20"><rect x="6.5" y="12" width="1.2" height="1.2" fill="#333"/><rect x="10.4" y="12" width="1.2" height="1.2" fill="#333"/><rect x="14.3" y="12" width="1.2" height="1.2" fill="#333"/></svg>
<div class="t" style="left:338.00px;top:417px;font-size:13px;line-height:13px;letter-spacing:0.390px;">Diretório DDA Windows:</div>
<div class="r" style="left:508px;top:413px;width:330px;height:20px;border:1px solid #8c8c8c;background:#fff"></div>
<div class="t" style="left:511.00px;top:417px;font-size:12px;line-height:12px;letter-spacing:0.107px;">O:/DDA - PagFor</div>
<div class="r" style="left:843px;top:413px;width:22px;height:20px;border:1px solid #7b7b7b;border-radius:3px;background:linear-gradient(160deg,#f4fbfa 0%,#dde9e7 50%,#b9cac7 100%)"></div>
<svg style="left:843px;top:413px" width="22" height="20"><rect x="6.5" y="12" width="1.2" height="1.2" fill="#333"/><rect x="10.4" y="12" width="1.2" height="1.2" fill="#333"/><rect x="14.3" y="12" width="1.2" height="1.2" fill="#333"/></svg>
<div class="t" style="left:338.00px;top:439px;font-size:13px;line-height:13px;letter-spacing:0.421px;">Diretório DDA Linux:</div>
<div class="r" style="left:508px;top:435px;width:330px;height:20px;border:1px solid #8c8c8c;background:#fff"></div>
<div class="t" style="left:511.00px;top:439px;font-size:12px;line-height:12px;letter-spacing:0.326px;">/home/financeiro/Contas a Pagar/DDA - PagFor</div>
<div class="r" style="left:843px;top:435px;width:22px;height:20px;border:1px solid #7b7b7b;border-radius:3px;background:linear-gradient(160deg,#f4fbfa 0%,#dde9e7 50%,#b9cac7 100%)"></div>
<svg style="left:843px;top:435px" width="22" height="20"><rect x="6.5" y="12" width="1.2" height="1.2" fill="#333"/><rect x="10.4" y="12" width="1.2" height="1.2" fill="#333"/><rect x="14.3" y="12" width="1.2" height="1.2" fill="#333"/></svg>
<div class="t" style="left:338.00px;top:497px;font-size:13px;line-height:13px;letter-spacing:0.456px;">Diretório Extrato Windows:</div>
<div class="r" style="left:508px;top:493px;width:330px;height:20px;border:1px solid #8c8c8c;background:#fff"></div>
<div class="r" style="left:843px;top:493px;width:22px;height:20px;border:1px solid #7b7b7b;border-radius:3px;background:linear-gradient(160deg,#f4fbfa 0%,#dde9e7 50%,#b9cac7 100%)"></div>
<svg style="left:843px;top:493px" width="22" height="20"><rect x="6.5" y="12" width="1.2" height="1.2" fill="#333"/><rect x="10.4" y="12" width="1.2" height="1.2" fill="#333"/><rect x="14.3" y="12" width="1.2" height="1.2" fill="#333"/></svg>
<div class="t" style="left:338.00px;top:519px;font-size:13px;line-height:13px;letter-spacing:0.491px;">Diretório Extrato Linux:</div>
<div class="r" style="left:508px;top:515px;width:330px;height:20px;border:1px solid #8c8c8c;background:#fff"></div>
<div class="t" style="left:511.00px;top:519px;font-size:12px;line-height:12px;letter-spacing:0.307px;">/home/financeiro/Contas a Pagar/Cheques_OFX_etc</div>
<div class="r" style="left:843px;top:515px;width:22px;height:20px;border:1px solid #7b7b7b;border-radius:3px;background:linear-gradient(160deg,#f4fbfa 0%,#dde9e7 50%,#b9cac7 100%)"></div>
<svg style="left:843px;top:515px" width="22" height="20"><rect x="6.5" y="12" width="1.2" height="1.2" fill="#333"/><rect x="10.4" y="12" width="1.2" height="1.2" fill="#333"/><rect x="14.3" y="12" width="1.2" height="1.2" fill="#333"/></svg>
<div class="t" style="left:338.00px;top:562px;font-size:13px;line-height:13px;letter-spacing:0.456px;">Diretório Extrato Windows:</div>
<div class="r" style="left:508px;top:558px;width:330px;height:20px;border:1px solid #8c8c8c;background:#fff"></div>
<div class="r" style="left:843px;top:558px;width:22px;height:20px;border:1px solid #7b7b7b;border-radius:3px;background:linear-gradient(160deg,#f4fbfa 0%,#dde9e7 50%,#b9cac7 100%)"></div>
<svg style="left:843px;top:558px" width="22" height="20"><rect x="6.5" y="12" width="1.2" height="1.2" fill="#333"/><rect x="10.4" y="12" width="1.2" height="1.2" fill="#333"/><rect x="14.3" y="12" width="1.2" height="1.2" fill="#333"/></svg>
<div class="t" style="left:338.00px;top:584px;font-size:13px;line-height:13px;letter-spacing:0.491px;">Diretório Extrato Linux:</div>
<div class="r" style="left:508px;top:580px;width:330px;height:20px;border:1px solid #8c8c8c;background:#fff"></div>
<div class="t" style="left:511.00px;top:584px;font-size:12px;line-height:12px;letter-spacing:0.517px;">/denise/projetos/jpostorede/extratos/febraban/bradesco</div>
<div class="r" style="left:843px;top:580px;width:22px;height:20px;border:1px solid #7b7b7b;border-radius:3px;background:linear-gradient(160deg,#f4fbfa 0%,#dde9e7 50%,#b9cac7 100%)"></div>
<svg style="left:843px;top:580px" width="22" height="20"><rect x="6.5" y="12" width="1.2" height="1.2" fill="#333"/><rect x="10.4" y="12" width="1.2" height="1.2" fill="#333"/><rect x="14.3" y="12" width="1.2" height="1.2" fill="#333"/></svg>
<div class="r" style="left:588px;top:812px;width:90px;height:26px;border:1px solid #7a7a7a;border-radius:3px;background:linear-gradient(165deg,#f0f7f6 0%,#dbe8e5 55%,#c3d4d0 100%)"></div>
<svg style="left:603px;top:817px" width="19" height="17" viewBox="0 0 19 17"><path d="M1 9.5 L6 15.5 L17.5 1.5 L16 0.8 L6 12 L3 8 Z" fill="#1fae1f" stroke="#0a2a6a" stroke-width="1.1" stroke-linejoin="round"/></svg>
<div class="t" style="left:625.50px;top:820px;font-size:11.5px;line-height:11.5px;letter-spacing:0.717px;">A<u>l</u>terar</div>
<div class="r" style="left:683px;top:812px;width:90px;height:26px;border:1px solid #7a7a7a;border-radius:3px;background:linear-gradient(165deg,#f0f7f6 0%,#dbe8e5 55%,#c3d4d0 100%)"></div>
<svg style="left:701px;top:817px" width="16" height="17" viewBox="0 0 16 17"><path d="M1.5 2 L4.5 0.8 L8 6 L11.5 0.8 L14.5 2 L10 8.5 L14.8 15 L11.5 16.2 L8 11 L4.5 16.2 L1.2 15 L6 8.5 Z" fill="#b50000" stroke="#6a0000" stroke-width="0.6"/></svg>
<div class="t" style="left:720.50px;top:820px;font-size:11.5px;line-height:11.5px;letter-spacing:0.533px;"><u>E</u>xcluir</div>
<div class="r" style="left:778px;top:812px;width:90px;height:26px;border:1px solid #7a7a7a;border-radius:3px;background:linear-gradient(165deg,#f0f7f6 0%,#dbe8e5 55%,#c3d4d0 100%)"></div>
<svg style="left:785px;top:819px" width="16" height="13" viewBox="0 0 16 13"><rect x="0.5" y="0.5" width="15" height="12" fill="#fff" stroke="#000"/><rect x="1" y="1" width="14" height="2" fill="#1010e0"/><path d="M1 4.5 H15 M1 6.5 H15 M1 8.5 H15 M1 10.5 H15 M4.5 3 V12 M8 3 V12 M11.5 3 V12" stroke="#000" stroke-width="0.8"/></svg>
<div class="t" style="left:806.50px;top:820px;font-size:11.5px;line-height:11.5px;letter-spacing:0.575px;"><u>C</u>onsultar</div>
<div class="r" style="left:873px;top:812px;width:90px;height:26px;border:1px solid #7a7a7a;border-radius:3px;background:linear-gradient(165deg,#f0f7f6 0%,#dbe8e5 55%,#c3d4d0 100%)"></div>
<svg style="left:888px;top:819px" width="16" height="13" viewBox="0 0 16 13"><rect x="0.5" y="0.5" width="15" height="12" fill="#fff" stroke="#000" stroke-width="1.2"/><rect x="1" y="1" width="14" height="2" fill="#1010e0"/></svg>
<div class="t" style="left:909.50px;top:820px;font-size:11.5px;line-height:11.5px;letter-spacing:0.740px;">Lim<u>p</u>ar</div>
<svg style="left:0;top:0" width="1275" height="872"><path d="M562.5 133 L512 236" stroke="#ff0000" stroke-width="4.5" stroke-linecap="butt"/><path d="M502 252.5 L505.5 226 L521.5 234.5 Z" fill="#ff0000"/><path d="M1083 563.5 L918 572.5" stroke="#ff0000" stroke-width="4.5"/><path d="M896.5 573.5 L921.5 563.5 L922 581.5 Z" fill="#ff0000"/></svg>
</body></html>
